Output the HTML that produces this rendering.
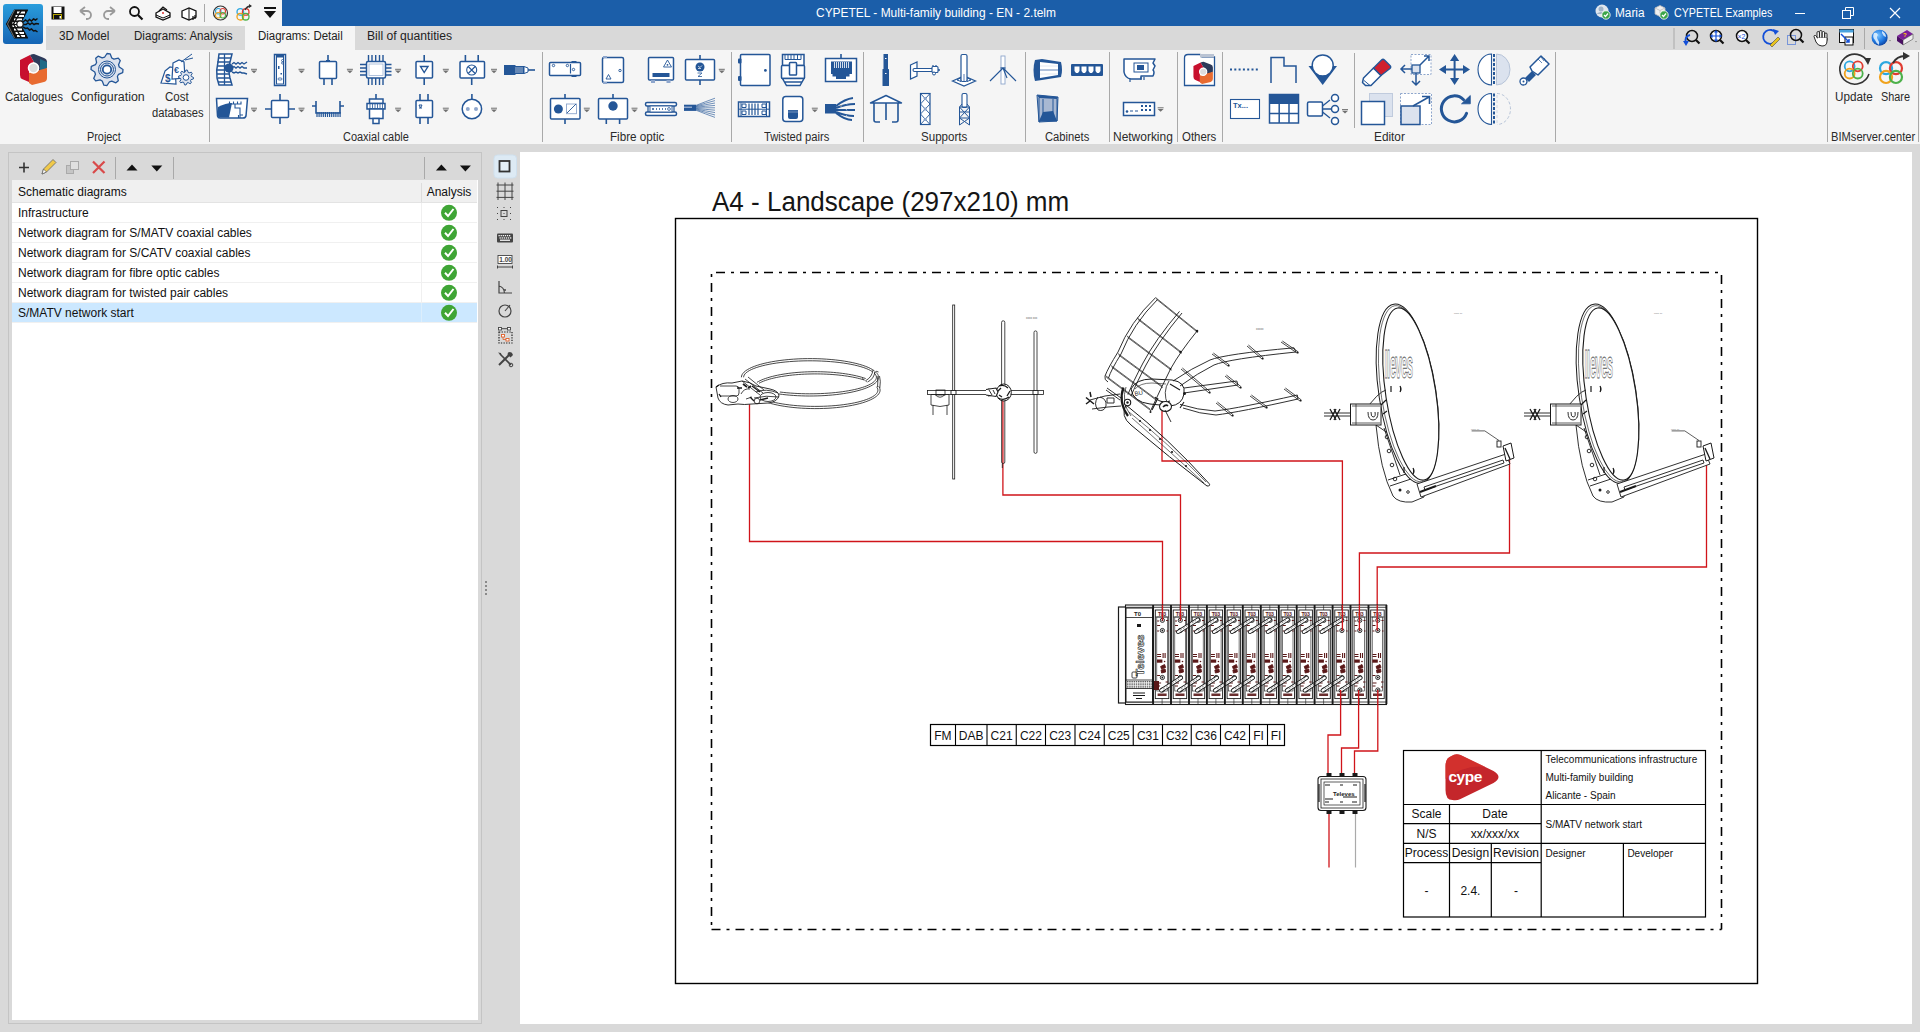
<!DOCTYPE html><html><head><meta charset="utf-8"><style>
*{margin:0;padding:0;box-sizing:border-box}
html,body{width:1920px;height:1032px;overflow:hidden;background:#d9d9d9;font-family:"Liberation Sans",sans-serif;color:#222}
.a{position:absolute;display:block}
.t{position:absolute;white-space:nowrap;font-size:12px;line-height:1}
</style></head><body><div class="a" style="left:0px;top:0px;width:1920px;height:1032px;background:#d9d9d9"></div>
<div class="a" style="left:0px;top:0px;width:282px;height:26px;background:#f5f5f5"></div>
<div class="a" style="left:0px;top:26px;width:46px;height:24px;background:#f5f5f5"></div>
<div class="a" style="left:282px;top:0px;width:1638px;height:26px;background:#1b5ea9"></div>
<div class="a" style="left:0px;top:50px;width:1920px;height:94px;background:#f5f5f5"></div>
<div class="a" style="left:245px;top:26px;width:110px;height:24px;background:#f5f5f5"></div>
<svg class="a" style="left:3px;top:4px;" width="40" height="40" viewBox="0 0 40 40"><defs><linearGradient id="lg" x1="0" y1="0" x2="0" y2="1"><stop offset="0" stop-color="#2a9ddc"/><stop offset="1" stop-color="#1565b5"/></linearGradient></defs>
<rect x="0" y="0" width="40" height="40" rx="3" fill="url(#lg)"/>
<path d="M24.5 6 L11.5 6 L3.5 20 L11.5 34 L24.5 34 L17 20 Z" fill="#111" stroke="#111" stroke-width="1.2" stroke-linejoin="round"/>
<path d="M14 8.5h8M12.5 12h8.5M11 15.5h8M9.5 19h7.5M9.5 22h7.5M11 25.5h8M12.5 29h8.5M14 32h8" stroke="#fff" stroke-width="2"/>
<path d="M11.5 6 L4.5 20 L11.5 34" stroke="#888" stroke-width="0.8" fill="none"/>
<path d="M13.5 7 L7 20 L13.5 33" stroke="#111" stroke-width="1.4" fill="none"/>
<path d="M18.5 6 L10.5 20 L18.5 34" stroke="#111" stroke-width="1.5" fill="none"/><circle cx="17" cy="20" r="3.2" fill="#fff" stroke="#111" stroke-width="1.2"/>
<g stroke="#111" stroke-width="1.5" fill="none"><path d="M20 18 l2.5-2 l2 1.5 l2-2 l2 1.5 l2-2 l2 1 l2-1.5"/><path d="M20.5 20.5 l2.5 0 l2-1.5 l2 1.5 l2-1.5 l2 1.5 l2-1 l3 0.5"/><path d="M20 23 l2.5 1.5 l2-0.5 l2 2 l2-1 l2 2 l2-0.5 l2 1.5"/></g>
</svg>
<svg class="a" style="left:51px;top:6px;" width="14" height="14" viewBox="0 0 14 14"><rect x="0.5" y="0.5" width="13" height="13" fill="#111"/><rect x="2.5" y="1" width="8" height="6" fill="#fff"/><rect x="2" y="8" width="9" height="5" fill="#b5a400"/><rect x="3" y="9" width="7" height="4" fill="#111"/><rect x="8.5" y="10" width="1.5" height="2.5" fill="#fff"/></svg>
<svg class="a" style="left:77px;top:5px;" width="16" height="16" viewBox="0 0 16 16"><path d="M3 6 L8 2 M3 6 L8 10 M3 6 H10 a4 4 0 0 1 0 8 H9" stroke="#9a9a9a" stroke-width="1.8" fill="none"/></svg>
<svg class="a" style="left:102px;top:5px;" width="16" height="16" viewBox="0 0 16 16"><path d="M13 6 L8 2 M13 6 L8 10 M13 6 H6 a4 4 0 0 0 0 8 H7" stroke="#9a9a9a" stroke-width="1.8" fill="none"/></svg>
<svg class="a" style="left:128px;top:5px;" width="16" height="16" viewBox="0 0 16 16"><circle cx="6.5" cy="6.5" r="4.5" stroke="#111" stroke-width="1.8" fill="none"/><path d="M10 10 L14.5 14.5" stroke="#111" stroke-width="2.2"/></svg>
<svg class="a" style="left:154px;top:5px;" width="18" height="16" viewBox="0 0 18 16"><path d="M2 8 L9 4 L16 8 L16 12 L9 15 L2 12 Z" fill="#fff" stroke="#111" stroke-width="1.3"/><path d="M5 6 L9 2 L13 5" stroke="#111" fill="none" stroke-width="1.2"/><circle cx="9" cy="8" r="1" fill="#d33"/><path d="M2 10 L9 13 L16 10" stroke="#111" fill="none" stroke-width="1"/></svg>
<svg class="a" style="left:180px;top:5px;" width="18" height="16" viewBox="0 0 18 16"><path d="M2 6 L9 3 L16 6 L16 12 L9 15 L2 12 Z" fill="#fff" stroke="#111" stroke-width="1.3"/><path d="M9 3 L9 15" stroke="#111" stroke-width="1"/><path d="M13 11 v4 M15 10 v4" stroke="#111" stroke-width="1.2"/></svg>
<div class="a" style="left:204px;top:4px;width:1px;height:18px;background:#a8a8a8"></div>
<svg class="a" style="left:212px;top:5px;" width="18" height="16" viewBox="0 0 18 16"><circle cx="8.5" cy="8" r="7" stroke="#333" stroke-width="1.2" fill="none"/><circle cx="6.25" cy="6.25" r="2.75" stroke="#2aa7e0" stroke-width="1.1" fill="none"/><circle cx="10.75" cy="6.25" r="2.75" stroke="#e03c31" stroke-width="1.1" fill="none"/><circle cx="6.25" cy="10.25" r="2.75" stroke="#f0a21b" stroke-width="1.1" fill="none"/><circle cx="10.75" cy="10.25" r="2.75" stroke="#4cb14a" stroke-width="1.1" fill="none"/></svg>
<svg class="a" style="left:235px;top:4px;" width="18" height="18" viewBox="0 0 18 18"><circle cx="5.3" cy="7.9" r="3.3000000000000003" stroke="#2aa7e0" stroke-width="1.3" fill="none"/><circle cx="10.7" cy="7.9" r="3.3000000000000003" stroke="#e03c31" stroke-width="1.3" fill="none"/><circle cx="5.3" cy="12.7" r="3.3000000000000003" stroke="#f0a21b" stroke-width="1.3" fill="none"/><circle cx="10.7" cy="12.7" r="3.3000000000000003" stroke="#4cb14a" stroke-width="1.3" fill="none"/><path d="M10 6 Q12 2 16 2" stroke="#333" stroke-width="1.5" fill="none"/><path d="M14 0 L17 2 L14 4" fill="#333"/></svg>
<svg class="a" style="left:263px;top:6px;" width="14" height="14" viewBox="0 0 14 14"><rect x="1" y="1" width="12" height="2" fill="#111"/><path d="M1 5 H13 L7 12 Z" fill="#111"/></svg>
<div class="t" style="left:816.00px;top:7.3px;font-size:12px;color:#fff;transform:scaleX(0.9959);transform-origin:0 0;">CYPETEL - Multi-family building - EN - 2.telm</div>
<svg class="a" style="left:1595px;top:4px;" width="16" height="16" viewBox="0 0 16 16"><circle cx="7" cy="7" r="6.5" fill="#dfe6ee"/><circle cx="6" cy="5" r="2.5" fill="#9fb3c8"/><path d="M1.5 10 Q6 6 10 10" fill="#9fb3c8"/><circle cx="11" cy="11" r="4.2" fill="#3aa54a" stroke="#fff" stroke-width="0.8"/><path d="M9 11 L10.5 12.5 L13 9.5" stroke="#fff" stroke-width="1.2" fill="none"/></svg>
<div class="t" style="left:1615.00px;top:7.3px;font-size:12px;color:#fff;transform:scaleX(0.9833);transform-origin:0 0;">Maria</div>
<svg class="a" style="left:1653px;top:4px;" width="16" height="16" viewBox="0 0 16 16"><path d="M2 4 L7 1.5 L12 4 L12 10 L7 12.5 L2 10 Z" fill="#f0f0f0" stroke="#bbb" stroke-width="0.8"/><path d="M2 4 L7 6.5 L12 4 M7 6.5 V12.5" stroke="#bbb" stroke-width="0.8" fill="none"/><circle cx="11" cy="11" r="4.2" fill="#3aa54a" stroke="#fff" stroke-width="0.8"/><path d="M9 11 L10.5 12.5 L13 9.5" stroke="#fff" stroke-width="1.2" fill="none"/></svg>
<div class="t" style="left:1674.00px;top:7.3px;font-size:12px;color:#fff;transform:scaleX(0.8909);transform-origin:0 0;">CYPETEL Examples</div>
<div class="a" style="left:1795px;top:13px;width:10px;height:1px;background:#fff"></div>
<svg class="a" style="left:1842px;top:7px;" width="12" height="12" viewBox="0 0 12 12"><rect x="0.5" y="3.5" width="8" height="8" stroke="#fff" fill="none"/><path d="M3.5 3.5 V0.5 H11.5 V8.5 H8.5" stroke="#fff" fill="none"/></svg>
<svg class="a" style="left:1889px;top:7px;" width="12" height="12" viewBox="0 0 12 12"><path d="M1 1 L11 11 M11 1 L1 11" stroke="#fff" stroke-width="1.2"/></svg>
<div class="t" style="left:59.00px;top:29.8px;font-size:12px;color:#222;transform:scaleX(0.9804);transform-origin:0 0;">3D Model</div>
<div class="t" style="left:134.00px;top:29.8px;font-size:12px;color:#222;transform:scaleX(0.9657);transform-origin:0 0;">Diagrams: Analysis</div>
<div class="t" style="left:257.50px;top:29.8px;font-size:12px;color:#222;transform:scaleX(0.9551);transform-origin:0 0;">Diagrams: Detail</div>
<div class="t" style="left:367.00px;top:29.8px;font-size:12px;color:#222;transform:scaleX(1.0119);transform-origin:0 0;">Bill of quantities</div>
<svg class="a" style="left:0;top:0" width="1920" height="200" viewBox="0 0 1920 200"><rect x="209.0" y="52" width="1" height="90" fill="#a9a9a9"/><rect x="542.0" y="52" width="1" height="90" fill="#a9a9a9"/><rect x="731.0" y="52" width="1" height="90" fill="#a9a9a9"/><rect x="863.0" y="52" width="1" height="90" fill="#a9a9a9"/><rect x="1025.0" y="52" width="1" height="90" fill="#a9a9a9"/><rect x="1109.0" y="52" width="1" height="90" fill="#a9a9a9"/><rect x="1177.0" y="52" width="1" height="90" fill="#a9a9a9"/><rect x="1222.0" y="52" width="1" height="90" fill="#a9a9a9"/><rect x="1555.0" y="52" width="1" height="90" fill="#a9a9a9"/><rect x="1827.0" y="52" width="1" height="90" fill="#a9a9a9"/><rect x="1918.0" y="52" width="1" height="90" fill="#a9a9a9"/><rect x="1354" y="53" width="1" height="75" fill="#a9a9a9"/><g transform="translate(18,53)">
<path d="M2 7 L12 2 L16 9 L11 12 L11 29 L4 26 Q2 25 2 22 Z" fill="#c8102e"/>
<path d="M12 2 Q14 1 16 1 L26 5 Q29 6 29 9 L29 15 L22 19 L16 9 Z" fill="#2d3a5a"/>
<path d="M22 6 L29 9 L29 15 L22 19 Z" fill="#1f6a86"/>
<path d="M11 20 L29 15 L29 25 Q29 28 26 29 L14 32 L11 30 Z" fill="#e86b30"/>
<circle cx="15.5" cy="15" r="5" fill="#ddd" stroke="#fff" stroke-width="1.6"/>
</g><polygon points="107.00,53.50 110.12,53.81 111.78,57.95 113.94,59.11 118.31,58.19 120.30,60.61 118.55,64.72 119.26,67.06 123.00,69.50 122.69,72.62 118.55,74.28 117.39,76.44 118.31,80.81 115.89,82.80 111.78,81.05 109.44,81.76 107.00,85.50 103.88,85.19 102.22,81.05 100.06,79.89 95.69,80.81 93.70,78.39 95.45,74.28 94.74,71.94 91.00,69.50 91.31,66.38 95.45,64.72 96.61,62.56 95.69,58.19 98.11,56.20 102.22,57.95 104.56,57.24" fill="#dde3ee" stroke="#245697" stroke-width="1.3" stroke-linejoin="round"/><circle cx="107" cy="69.5" r="8.5" stroke="#245697" stroke-width="1" fill="none"/><circle cx="107" cy="69.5" r="6.5" stroke="#245697" stroke-width="1" fill="none"/><circle cx="107" cy="69.5" r="4.2" stroke="#245697" stroke-width="1.8" fill="#fff"/><g stroke="#245697" stroke-width="1.2" fill="#fff">
<path d="M165 71 L170 67 L175 68 L176 84 L161 83 Z"/>
<path d="M173 63 L179 60 L184 62 L185 78 L172 79 Z"/>
</g>
<text x="165" y="82" font-size="10" font-weight="bold" fill="#245697" font-family="Liberation Sans">$</text>
<text x="174" y="73" font-size="9" font-weight="bold" fill="#245697" font-family="Liberation Sans">€</text>
<path d="M181 62 L192 54 M185 60 L193 58" stroke="#245697" stroke-width="1"/><polygon points="186.00,70.00 187.46,70.14 188.10,72.42 189.06,72.93 191.30,72.20 192.24,73.33 191.08,75.40 191.39,76.43 193.50,77.50 193.36,78.96 191.08,79.60 190.57,80.56 191.30,82.80 190.17,83.74 188.10,82.58 187.07,82.89 186.00,85.00 184.54,84.86 183.90,82.58 182.94,82.07 180.70,82.80 179.76,81.67 180.92,79.60 180.61,78.57 178.50,77.50 178.64,76.04 180.92,75.40 181.43,74.44 180.70,72.20 181.83,71.26 183.90,72.42 184.93,72.11" fill="#dde3ee" stroke="#245697" stroke-width="1" stroke-linejoin="round"/><circle cx="186" cy="77.5" r="2.8" stroke="#245697" stroke-width="1" fill="#fff"/><path d="M219 54 H232 L230 62 Q228 70 230 78 L232 85 H219 L217 78 Q216 70 218 62 Z" fill="#fff" stroke="#245697" stroke-width="1.5"/>
<g stroke="#245697" stroke-width="1.3"><path d="M218 58H231M217.5 62H230M217 66H229M217 70H229M217 74H229M217.5 78H230M218 82H231M224.5 54V85"/></g>
<circle cx="229" cy="68" r="4.5" fill="#245697"/>
<path d="M232 64 l2 -1.5 l2 1.5 l2 -1.5 l2 1.5 l2 -1.5 l2 1.5 l3 -2 M232 68 l2 -1.5 l2 1.5 l2 -1.5 l2 1.5 l2 -1.5 l2 1.5 l3 0 M232 72 l2 1 l2 -1 l2 1 l2 -1 l2 1 l2 0 l3 1" stroke="#245697" stroke-width="1.4" fill="none"/><rect x="251" y="68.8" width="6" height="1" fill="#707070"/><path d="M251 70.5 H257 L254 73.3 Z" fill="#707070"/><rect x="274.5" y="54.5" width="11" height="31" stroke="#245697" fill="#fff" stroke-width="1.5"/><rect x="276.5" y="56" width="7" height="28" stroke="#245697" stroke-width="1" fill="#fff"/><rect x="276" y="55" width="8" height="2.5" fill="#245697"/><rect x="278" y="66" width="1.5" height="3" fill="#245697"/><rect x="280.5" y="73" width="1.5" height="1.5" fill="#245697"/><rect x="278" y="78" width="4" height="2" rx="1" stroke="#245697" stroke-width="0.8" fill="none"/><circle cx="282.5" cy="60.5" r="1" stroke="#245697" stroke-width="0.8" fill="none"/><circle cx="282.5" cy="63" r="1" stroke="#245697" stroke-width="0.8" fill="none"/><rect x="298.5" y="68.8" width="6" height="1" fill="#707070"/><path d="M298.5 70.5 H304.5 L301.5 73.3 Z" fill="#707070"/><rect x="319.5" y="61.5" width="17" height="17" rx="1" stroke="#245697" fill="#fff" stroke-width="1.5"/><path d="M328 55V61M324 79V85M332 79V85" stroke="#245697" stroke-width="1.6"/><rect x="326" y="60" width="4" height="2" fill="#245697"/><rect x="346.9" y="68.8" width="6" height="1" fill="#707070"/><path d="M346.9 70.5 H352.9 L349.9 73.3 Z" fill="#707070"/><path d="M368.5 55V61M368.5 78V85M372 55V61M372 78V85M375.7 55V61M375.7 78V85M379.5 55V61M379.5 78V85M383 55V61M383 78V85M360 64.5H366.5M385.5 64.5H391.5M360 68H366.5M385.5 68H391.5M360 71.5H366.5M385.5 71.5H391.5M360 75H366.5M385.5 75H391.5" stroke="#245697" stroke-width="1.4"/><rect x="366.5" y="61.5" width="19" height="16.5" rx="1.5" stroke="#245697" fill="#fff" stroke-width="1.5"/><rect x="369" y="64" width="14" height="11.5" stroke="#9fb4d4" stroke-width="0.8" fill="none"/><rect x="395.1" y="68.8" width="6" height="1" fill="#707070"/><path d="M395.1 70.5 H401.1 L398.1 73.3 Z" fill="#707070"/><rect x="416" y="61.5" width="16.5" height="16.5" rx="1" stroke="#245697" fill="#fff" stroke-width="1.5"/><path d="M424.2 55V61.5M424.2 78V85" stroke="#245697" stroke-width="1.6"/><path d="M420.5 66.5H428L424.2 72.5Z" stroke="#245697" stroke-width="1.4" fill="none"/><rect x="442.8" y="68.8" width="6" height="1" fill="#707070"/><path d="M442.8 70.5 H448.8 L445.8 73.3 Z" fill="#707070"/><rect x="460" y="61.5" width="24.5" height="16.5" rx="1" stroke="#245697" fill="#fff" stroke-width="1.5"/><path d="M465.4 55V61.5M478.2 55V61.5M471.7 78V85" stroke="#245697" stroke-width="1.6"/><circle cx="471.7" cy="70" r="5" stroke="#245697" stroke-width="1.1" fill="none"/><path d="M468.2 66.5L475.2 73.5M475.2 66.5L468.2 73.5" stroke="#245697" stroke-width="1.1"/><rect x="491" y="68.8" width="6" height="1" fill="#707070"/><path d="M491 70.5 H497 L494 73.3 Z" fill="#707070"/><rect x="504" y="65" width="11.5" height="10" fill="#245697"/><path d="M515 66H524V74H515Z" fill="#245697"/><path d="M516 67v6M518 67v6M520 67v6M522 67v6" stroke="#fff" stroke-width="0.6"/><path d="M524 66.5L528 68V72L524 73.5Z" fill="#fff" stroke="#245697" stroke-width="1"/><path d="M528 70H535" stroke="#245697" stroke-width="1.6"/><path d="M216.5 98.5H247.5L246 116Q245.5 118 243 118H220Q218 118 217.5 116Z" stroke="#245697" fill="#fff" stroke-width="1.5"/><path d="M218 107 Q226 103 232 103 L229 117.5 H220 Q218 117.5 218 116Z" fill="#245697"/><path d="M229.5 101.5V104H241V101.5M233.5 101.5V104M237.5 101.5V104M235 104V108H240V115H243M240 115V118M238.5 115V118" stroke="#245697" stroke-width="1.1" fill="none"/><rect x="251" y="107.7" width="6" height="1" fill="#707070"/><path d="M251 109.4 H257 L254 112.2 Z" fill="#707070"/><rect x="271.5" y="100.5" width="17" height="17" rx="1" stroke="#245697" fill="#fff" stroke-width="1.5"/><path d="M280 94V100.5M280 117.5V124M265 109H271.5M288.5 109H295" stroke="#245697" stroke-width="1.6"/><rect x="298.5" y="107.7" width="6" height="1" fill="#707070"/><path d="M298.5 109.4 H304.5 L301.5 112.2 Z" fill="#707070"/><path d="M316 101V113H340V101M312 106H316M340 106H344" stroke="#245697" stroke-width="1.6" fill="none"/><path d="M317.0 112V117M319.1 112V117M321.2 112V117M323.3 112V117M325.4 112V117M327.5 112V117M329.6 112V117M331.7 112V117M333.8 112V117M335.9 112V117M338.0 112V117M340.1 112V117" stroke="#245697" stroke-width="1.2"/><path d="M376 94V99" stroke="#245697" stroke-width="1.6"/><rect x="369.5" y="99" width="13.5" height="4.5" stroke="#245697" fill="#fff" stroke-width="1.5"/><rect x="367" y="103.5" width="18" height="5.5" stroke="#245697" fill="#fff" stroke-width="1.5"/><path d="M370 104v4M372.5 104v4M375 104v4M377.5 104v4M380 104v4M382.5 104v4" stroke="#245697" stroke-width="0.8"/><rect x="369.5" y="109" width="13.5" height="9.5" stroke="#245697" fill="#fff" stroke-width="1.5"/><rect x="373" y="118.5" width="6" height="5" stroke="#245697" fill="#fff" stroke-width="1.5"/><rect x="395.1" y="107.7" width="6" height="1" fill="#707070"/><path d="M395.1 109.4 H401.1 L398.1 112.2 Z" fill="#707070"/><rect x="416" y="100.5" width="16.5" height="17" rx="1" stroke="#245697" fill="#fff" stroke-width="1.5"/><path d="M420 94V100.5M428 94V100.5M420 117.5V124M428 117.5V124" stroke="#245697" stroke-width="1.6"/><path d="M419 105H422L420.5 108ZM419 108H422" stroke="#245697" stroke-width="1" fill="none"/><rect x="442.8" y="107.7" width="6" height="1" fill="#707070"/><path d="M442.8 109.4 H448.8 L445.8 112.2 Z" fill="#707070"/><circle cx="471.9" cy="109" r="9.7" stroke="#245697" fill="#fff" stroke-width="1.5"/><path d="M471.9 94V99.3" stroke="#245697" stroke-width="1.6"/><circle cx="467.8" cy="109" r="2" fill="#8ea6cc"/><circle cx="476" cy="109" r="2" fill="#8ea6cc"/><rect x="491" y="107.7" width="6" height="1" fill="#707070"/><path d="M491 109.4 H497 L494 112.2 Z" fill="#707070"/><rect x="549.5" y="62.5" width="31" height="13" rx="1" stroke="#245697" fill="#fff" stroke-width="1.5"/><rect x="571.5" y="61" width="5" height="2" fill="#245697"/><rect x="571.5" y="75" width="5" height="2" fill="#245697"/><circle cx="553.5" cy="65.5" r="1.2" stroke="#245697" stroke-width="0.9" fill="none"/><circle cx="567.4" cy="65.5" r="1.2" stroke="#245697" stroke-width="0.9" fill="none"/><circle cx="573.5" cy="69.5" r="1.2" stroke="#245697" stroke-width="0.9" fill="none"/><path d="M570.5 64V73.5" stroke="#245697" stroke-width="1.2"/><rect x="602.5" y="57.5" width="21" height="25" rx="1.5" stroke="#245697" fill="#fff" stroke-width="1.5"/><rect x="603" y="56" width="4" height="2" fill="#8ea6cc"/><rect x="603" y="82" width="4" height="2" fill="#8ea6cc"/><path d="M608.5 74.5L611 79H606Z" stroke="#245697" stroke-width="0.9" fill="none"/><circle cx="620" cy="70.5" r="1.2" stroke="#245697" stroke-width="0.9" fill="none"/><rect x="648.5" y="57.5" width="25" height="22.5" rx="1" stroke="#245697" fill="#fff" stroke-width="1.5"/><rect x="652.5" y="73" width="17" height="4" fill="#245697"/><path d="M667.5 60L671.5 67H663.5Z" stroke="#245697" stroke-width="0.9" fill="none"/><circle cx="667.5" cy="64.8" r="0.9" fill="#245697"/><rect x="651" y="80" width="4" height="3" fill="#8ea6cc"/><rect x="666.5" y="80" width="4" height="3" fill="#8ea6cc"/><rect x="685.5" y="59.5" width="29" height="20.5" rx="1" stroke="#245697" fill="#fff" stroke-width="1.5"/><path d="M700 55V59.5M700 80V85" stroke="#245697" stroke-width="1.6"/><circle cx="700" cy="67" r="4.5" fill="#245697"/><path d="M698 66l2 1.5l2 -2M698 68.5l3 0" stroke="#fff" stroke-width="0.7" fill="none"/><path d="M697.5 73H702L698 76.5H702" stroke="#245697" stroke-width="0.8" fill="none"/><rect x="718.8" y="68.8" width="6" height="1" fill="#707070"/><path d="M718.8 70.5 H724.8 L721.8 73.3 Z" fill="#707070"/><rect x="550.5" y="98.5" width="29.5" height="20.5" rx="1" stroke="#245697" fill="#fff" stroke-width="1.5"/><path d="M565 94V98.5M565 119V124" stroke="#245697" stroke-width="1.6"/><circle cx="558.4" cy="109" r="4.5" fill="#245697"/><rect x="566.5" y="104" width="10" height="9.7" stroke="#8ea6cc" stroke-width="0.9" fill="none"/><path d="M567 113L576 104" stroke="#245697" stroke-width="0.9"/><rect x="583.8" y="107.7" width="6" height="1" fill="#707070"/><path d="M583.8 109.4 H589.8 L586.8 112.2 Z" fill="#707070"/><rect x="598.5" y="98.5" width="29" height="20.5" rx="1" stroke="#245697" fill="#fff" stroke-width="1.5"/><path d="M613 94V98.5M606.3 119V124M619.6 119V124" stroke="#245697" stroke-width="1.6"/><circle cx="613" cy="106" r="4.7" fill="#245697"/><rect x="631.5" y="107.7" width="6" height="1" fill="#707070"/><path d="M631.5 109.4 H637.5 L634.5 112.2 Z" fill="#707070"/><rect x="645.5" y="102.5" width="31" height="3.5" rx="1.5" stroke="#245697" fill="#fff" stroke-width="1.5"/><rect x="645.5" y="112" width="31" height="3.5" rx="1.5" stroke="#245697" fill="#fff" stroke-width="1.5"/><path d="M648 106V112M674 106V112" stroke="#245697" stroke-width="1.2"/><rect x="650" y="106" width="22" height="6" stroke="#245697" stroke-width="0.9" fill="#fff"/><path d="M652 109h2M656 109h1M659 109h1M662 109h1M665 109h1" stroke="#245697" stroke-width="1.4"/><circle cx="669" cy="109" r="1.4" stroke="#245697" stroke-width="0.8" fill="none"/><rect x="684" y="104.7" width="12" height="6.2" fill="#245697"/><rect x="684" y="106.5" width="8" height="1.5" fill="#8ea6cc"/><path d="M696 105.4 Q705 101.8 715 98.2M696 106.0 Q705 103.3 715 100.6M696 106.6 Q705 104.8 715 103.0M696 107.2 Q705 106.3 715 105.4M696 107.8 Q705 107.8 715 107.8M696 108.4 Q705 109.3 715 110.2M696 109.0 Q705 110.8 715 112.6M696 109.6 Q705 112.3 715 115.0M696 110.2 Q705 113.8 715 117.4" stroke="#245697" stroke-width="0.8" fill="none" opacity="0.8"/><rect x="740.5" y="54.5" width="29.5" height="31" rx="1" stroke="#245697" fill="#fff" stroke-width="1.5"/><rect x="738" y="58.5" width="3.5" height="5" rx="1" fill="#245697"/><rect x="738" y="76" width="3.5" height="5" rx="1" fill="#245697"/><circle cx="765.4" cy="70.4" r="1.4" fill="#245697"/><path d="M782.5 54.5H804V65.5H782.5Z" stroke="#245697" fill="#fff" stroke-width="1.5"/><path d="M785 55V59.5H801V55M788 55V59M791 55V59M794 55V59M797.5 55V59" stroke="#245697" stroke-width="1" fill="none"/><rect x="781.5" y="65.5" width="23" height="13" rx="1" stroke="#245697" fill="#fff" stroke-width="1.5"/><rect x="789.5" y="62.5" width="7" height="12.5" rx="0.8" stroke="#245697" fill="#fff" stroke-width="1.5"/><path d="M782.5 78.5H804L802 82H784.5ZM784.5 82H802L800 85.5H786.5Z" stroke="#245697" fill="#fff" stroke-width="1.5"/><rect x="825.5" y="58.5" width="31" height="23" stroke="#245697" fill="#fff" stroke-width="1.5"/><path d="M841 54V58.5" stroke="#245697" stroke-width="1.6"/><path d="M831 61.5H852V74H849.5V76.5H846V79H836V76.5H832.5V74H831Z" fill="#245697"/><path d="M834.5 62V68M836.5 62V68M838.5 62V68M840.5 62V68M842.5 62V68M844.5 62V68M846.5 62V68M848.5 62V68" stroke="#fff" stroke-width="0.8"/><rect x="738.5" y="102" width="31" height="14.5" stroke="#245697" fill="#fff" stroke-width="1.5"/><path d="M738.5 109.2H769.5" stroke="#245697" stroke-width="1"/><path d="M742 104V107.5H746V104ZM742 111V114.5H746V111ZM762 104V107.5H766V104ZM762 111V114.5H766V111Z" stroke="#245697" stroke-width="1" fill="none"/><path d="M749 103.5V115M752 103.5V115M755 103.5V115M758 103.5V115" stroke="#245697" stroke-width="1.2"/><path d="M741 102.5V116M766.5 102.5V116" stroke="#245697" stroke-width="1"/><rect x="782.8" y="96.5" width="20" height="25" rx="3" stroke="#245697" fill="#fff" stroke-width="1.5"/><path d="M788 110H798V117Q798 119 796 119H790Q788 119 788 117Z" fill="#245697"/><path d="M789 110.5v2.5M791 110.5v2.5M793 110.5v2.5M795 110.5v2.5M797 110.5v2.5" stroke="#8ea6cc" stroke-width="0.8"/><rect x="811.8" y="107.7" width="6" height="1" fill="#707070"/><path d="M811.8 109.4 H817.8 L814.8 112.2 Z" fill="#707070"/><rect x="825" y="104" width="11" height="9.5" fill="#245697"/><path d="M836 106 Q845 99 853 98M836 108 Q846 104 855 104M836 110 Q846 110 855 110M836 112 Q846 116 854 116M836 113 Q845 120 852 120" stroke="#245697" stroke-width="2" fill="none"/><path d="M840 105 l1 1.5 l1 -1.5 M846 103 l1 1.5 M846 109 l1 1.5 M846 115 l1 1.5" stroke="#fff" stroke-width="0.6"/><rect x="883.5" y="54" width="4.5" height="15" fill="#245697"/><rect x="882.5" y="69" width="6.5" height="17" rx="0.5" fill="#245697"/><rect x="885" y="58" width="1.5" height="1" fill="#fff"/><rect x="885" y="73" width="1.5" height="1" fill="#fff"/><path d="M910.5 65 L917 62 V76 L910.5 79 Z" stroke="#245697" stroke-width="1.2" fill="#fff"/><rect x="913" y="68.5" width="25" height="3" rx="1.5" stroke="#245697" stroke-width="1.1" fill="#fff"/><path d="M933 67V65M936 67V65" stroke="#245697" stroke-width="1.2"/><rect x="932" y="66.5" width="6" height="6" rx="1" stroke="#245697" stroke-width="1.1" fill="#fff"/><circle cx="934" cy="73.5" r="1.5" stroke="#245697" stroke-width="1" fill="#fff"/><path d="M938 70H940" stroke="#245697" stroke-width="1.3"/><path d="M952.5 81L964 76L975.5 81L964 86Z" stroke="#245697" stroke-width="1.2" fill="#fff"/><path d="M957 80L961 77.5V81.5ZM971 80L967 77.5V81.5Z" stroke="#245697" stroke-width="1" fill="none"/><rect x="961" y="54.5" width="6" height="27" rx="1.5" stroke="#245697" stroke-width="1.2" fill="#fff"/><path d="M964 74V81" stroke="#8ea6cc" stroke-width="1.5"/><rect x="1001" y="56" width="4" height="28" stroke="#8ea6cc" stroke-width="0.9" fill="#fff"/><path d="M1003 68L990 81M1003 68L1016 81M1003 68L1007 78" stroke="#245697" stroke-width="1.1" fill="none"/><path d="M1000.5 68H1005.5" stroke="#245697" stroke-width="1.3"/><path d="M870.5 103L886 95.5L901.5 103Z" stroke="#245697" stroke-width="1.4" fill="#fff" stroke-linejoin="round"/><path d="M874 103V120Q874 122 876 122H880M898 103V120Q898 122 896 122H892M886 103V120" stroke="#245697" stroke-width="1.6" fill="none"/><rect x="920.5" y="93.5" width="9.5" height="31" stroke="#245697" stroke-width="1.2" fill="#fff"/><path d="M920.5 93.5L930 104L920.5 114L930 124.5M930 93.5L920.5 104L930 114L920.5 124.5" stroke="#245697" stroke-width="0.9" fill="none"/><circle cx="925.2" cy="98.5" r="1.6" fill="#8ea6cc"/><circle cx="925.2" cy="109" r="1.6" fill="#8ea6cc"/><circle cx="925.2" cy="119.5" r="1.6" fill="#8ea6cc"/><rect x="962" y="93.5" width="5" height="14" rx="1.5" stroke="#245697" stroke-width="1.1" fill="#fff"/><path d="M962 104L959.5 107V125M967 104L969.5 107V125M959.5 107H969.5M959.5 112H969.5M959.5 118H969.5M959.5 107L969.5 118M969.5 107L959.5 118M959.5 118L969.5 125M969.5 118L959.5 125" stroke="#245697" stroke-width="1" fill="none"/><path d="M1035 60 Q1032 70 1035 81 L1042 80 L1061 77 Q1063 70 1061 62 L1042 59 Z" fill="#245697"/><path d="M1040 62 L1058 64 V75 L1040 78 Z" fill="#fff"/><path d="M1040 70H1058" stroke="#8ea6cc" stroke-width="1.4"/><path d="M1040 66H1058M1040 74H1058" stroke="#dbe2ee" stroke-width="0.8"/><rect x="1071" y="64" width="32" height="12" rx="1" fill="#245697"/><path d="M1074.5 66.5H1079.5V71L1078.0 73H1076.0L1074.5 71Z" fill="#fff"/><path d="M1081.5 66.5H1086.5V71L1085.0 73H1083.0L1081.5 71Z" fill="#fff"/><path d="M1088.5 66.5H1093.5V71L1092.0 73H1090.0L1088.5 71Z" fill="#fff"/><path d="M1095.5 66.5H1100.5V71L1099.0 73H1097.0L1095.5 71Z" fill="#fff"/><path d="M1037 95 L1058 97 L1057 121 L1039 122 Z" fill="#a8b8d2" stroke="#245697" stroke-width="1"/><path d="M1037 95L1058 97L1057 99L1039 98Z" fill="#245697"/><path d="M1039 98V122M1043 99V119M1053 99V117M1057 99V121M1043 119L1039 122M1043 117H1053L1057 121H1039Z" stroke="#245697" stroke-width="1" fill="none"/><path d="M1043 112L1053 111L1057 121H1039Z" fill="#245697"/><path d="M1124 59 H1155 L1153 63 L1155 66 L1153 70 Q1155 72 1153 76 H1141 V79 H1131 Q1125 78 1124 72 Z" stroke="#245697" fill="#fff" stroke-width="1.5" stroke-linejoin="round"/><rect x="1134" y="63" width="14" height="9" stroke="#245697" stroke-width="1" fill="#fff"/><rect x="1137" y="65" width="7" height="5" fill="#245697"/><path d="M1130 79V82M1141 77V80M1144 77V80" stroke="#245697" stroke-width="1.2"/><rect x="1123.5" y="102.5" width="31" height="13" stroke="#245697" fill="#fff" stroke-width="1.5"/><circle cx="1127" cy="111.5" r="1.3" fill="#245697"/><path d="M1130 111H1133M1135 111H1138" stroke="#245697" stroke-width="1.1"/><path d="M1141 105h2v2h-2zM1145 105h2v2h-2zM1149 105h2v2h-2zM1141 109h2v2h-2zM1145 109h2v2h-2zM1149 109h2v2h-2z" fill="#245697"/><rect x="1157.6" y="107.3" width="6" height="1" fill="#707070"/><path d="M1157.6 109.0 H1163.6 L1160.6 111.8 Z" fill="#707070"/><path d="M1184.5 58 Q1184.5 54.5 1188 54.5 H1200 L1202 57 H1214.5 V85.5 H1184.5 Z" fill="#fff" stroke="#245697" stroke-width="1.3"/><rect x="1200" y="54" width="14" height="3.5" fill="#b9c3d3"/><g transform="translate(1192,61) scale(0.72)">
<path d="M2 7 L12 2 L16 9 L11 12 L11 29 L4 26 Q2 25 2 22 Z" fill="#c8102e"/>
<path d="M12 2 Q14 1 16 1 L26 5 Q29 6 29 9 L29 15 L22 19 L16 9 Z" fill="#2d3a5a"/>
<path d="M11 20 L29 15 L29 25 Q29 28 26 29 L14 32 L11 30 Z" fill="#e86b30"/>
<circle cx="15.5" cy="15" r="5" fill="#ddd" stroke="#fff" stroke-width="1.6"/></g><path d="M1230 69.5H1260" stroke="#245697" stroke-width="2" stroke-dasharray="2 2.3"/><path d="M1271 83V57.5H1284V66H1296V83" stroke="#245697" stroke-width="1.5" fill="none"/><path d="M1308.5 66 L1322.7 85 L1337 66 Z" fill="#245697"/><circle cx="1322.7" cy="65.5" r="10.5" stroke="#245697" fill="#fff" stroke-width="1.5"/><path d="M1363.5 78 L1373.5 68 L1381 75.5 L1371 85.5 H1365.5 L1362.5 82.5 Z" stroke="#245697" fill="#fff" stroke-width="1.5" stroke-linejoin="round"/><path d="M1373.5 68 L1381.5 60 Q1383 58.5 1384.5 60 L1390 65.5 Q1391.5 67 1390 68.5 L1381 75.5 Z" fill="#d0202e" stroke="#245697" stroke-width="1.3" stroke-linejoin="round"/><path d="M1364 80.5 L1370 85.5" stroke="#245697" stroke-width="1"/><rect x="1411" y="54.5" width="20" height="20" stroke="#8ea6cc" stroke-width="1" stroke-dasharray="2 1.5" fill="#fff"/><rect x="1412" y="65" width="8" height="8" fill="#dbe2ee" stroke="#245697" stroke-width="1.3"/><path d="M1420 65L1429 56M1424 56H1429V61M1412 69H1401M1405 65L1401 69L1405 73M1416 73V85M1412 81L1416 85L1420 81" stroke="#245697" stroke-width="1.5" fill="none"/><path d="M1454.6 61V78M1446 69.5H1463" stroke="#245697" stroke-width="2"/><path d="M1454.6 54L1450 61H1459.2Z M1454.6 85L1450 78H1459.2Z M1439 69.5L1446 65V74Z M1470 69.5L1463 65V74Z" fill="#245697"/><path d="M1491.5 54 A13.5 15.5 0 0 0 1491.5 85 Z" fill="#fff" stroke="#245697" stroke-width="1.1"/><path d="M1496.5 54 A13.5 15.5 0 0 1 1496.5 85 Z" fill="#dbe2ee" stroke="#b7c4d8" stroke-width="1"/><path d="M1494 54V85" stroke="#245697" stroke-width="2" stroke-dasharray="3 1.5"/><path d="M1525 78 L1532 71 L1536 75 L1529 82 Z" fill="#245697"/><circle cx="1523.5" cy="81.5" r="3.5" fill="#fff" stroke="#245697" stroke-width="1.3"/><circle cx="1523.5" cy="81.5" r="1" fill="#245697"/><path d="M1532 71 L1530 67 L1541 56 L1549 64 L1538 75 Z" stroke="#245697" fill="#fff" stroke-width="1.5" stroke-linejoin="round"/><path d="M1538 59L1542 63M1541 57L1544 61M1544 58L1546 62" stroke="#245697" stroke-width="0.7"/><rect x="1230.5" y="99.5" width="29" height="19" stroke="#245697" stroke-width="1.1" fill="#fff"/><text x="1233" y="107.5" font-size="7.5" font-weight="bold" fill="#245697" font-family="Liberation Sans">Tx...</text><rect x="1269.5" y="94.5" width="29" height="28.5" stroke="#245697" fill="#fff" stroke-width="1.5"/><rect x="1269.5" y="94.5" width="29" height="9.5" fill="#245697"/><path d="M1269.5 113.5H1298.5M1279.2 104V123M1289 104V123" stroke="#245697" stroke-width="1.5"/><rect x="1307.5" y="102" width="15" height="14" rx="1.5" stroke="#245697" fill="#fff" stroke-width="1.5"/><path d="M1322.5 106L1330 100M1322.5 109H1331.5M1322.5 112L1330 118" stroke="#245697" stroke-width="1.3"/><circle cx="1335" cy="98" r="3.5" stroke="#245697" fill="#fff" stroke-width="1.5" stroke-width="1.2"/><circle cx="1335" cy="109" r="3.5" stroke="#245697" fill="#fff" stroke-width="1.5" stroke-width="1.2"/><circle cx="1335" cy="121" r="3.5" stroke="#245697" fill="#fff" stroke-width="1.5" stroke-width="1.2"/><rect x="1342" y="109.1" width="6" height="1" fill="#707070"/><path d="M1342 110.8 H1348 L1345 113.6 Z" fill="#707070"/><rect x="1369.5" y="93.5" width="23" height="23" fill="#dbe2ee" stroke="#c0cbdd" stroke-width="1"/><rect x="1361.5" y="101.5" width="23" height="23" stroke="#245697" fill="#fff" stroke-width="1.5"/><rect x="1400.5" y="93.5" width="31" height="31" stroke="#8ea6cc" stroke-width="1" stroke-dasharray="2 1.5" fill="#fff"/><rect x="1401" y="106" width="19" height="18.5" fill="#dbe2ee" stroke="#245697" stroke-width="1.5"/><path d="M1413 106L1429 97M1422 96.5H1429.5V104" stroke="#245697" stroke-width="1.6" fill="none"/><path d="M1466.6 113.3 A13 13 0 1 1 1463.6 99.7" stroke="#245697" stroke-width="3" fill="none" stroke-linecap="round"/><path d="M1461.5 103.8 L1470.3 103.8 L1470.3 95.5 Z" fill="#245697" stroke="#245697" stroke-width="0.8" stroke-linejoin="round"/><path d="M1491.5 93.5 A13.5 15.5 0 0 0 1491.5 124.5 Z" fill="#fff" stroke="#245697" stroke-width="1.1"/><path d="M1497 93.5 A13.5 15.5 0 0 1 1497 124.5" fill="none" stroke="#b7c4d8" stroke-width="1" stroke-dasharray="3 2"/><path d="M1497 95V124" stroke="#d0d8e4" stroke-width="1" stroke-dasharray="3 2"/><path d="M1494 93.5V124.5" stroke="#245697" stroke-width="2" stroke-dasharray="3 1.5"/><g><path d="M1868 62 A15 15 0 1 0 1869 74" stroke="#333" stroke-width="1.6" fill="none"/><path d="M1864 58 L1871 58 L1868 65Z" fill="#333"/><circle cx="1849.65" cy="66.35" r="4.95" stroke="#2aa7e0" stroke-width="1.8" fill="none"/><circle cx="1857.75" cy="66.35" r="4.95" stroke="#e03c31" stroke-width="1.8" fill="none"/><circle cx="1849.65" cy="73.55" r="4.95" stroke="#f0a21b" stroke-width="1.8" fill="none"/><circle cx="1857.75" cy="73.55" r="4.95" stroke="#4cb14a" stroke-width="1.8" fill="none"/></g><circle cx="1886.05" cy="68.15" r="6.050000000000001" stroke="#2aa7e0" stroke-width="2.2" fill="none"/><circle cx="1895.95" cy="68.15" r="6.050000000000001" stroke="#e03c31" stroke-width="2.2" fill="none"/><circle cx="1886.05" cy="76.95" r="6.050000000000001" stroke="#f0a21b" stroke-width="2.2" fill="none"/><circle cx="1895.95" cy="76.95" r="6.050000000000001" stroke="#4cb14a" stroke-width="2.2" fill="none"/><path d="M1893 63 Q1897 56 1905 56" stroke="#333" stroke-width="2.2" fill="none"/><path d="M1903 52 L1910 56 L1903 60Z" fill="#333"/><rect x="1673.5" y="28" width="1" height="21" fill="#a9a9a9"/><rect x="1864" y="28" width="1" height="21" fill="#a9a9a9"/><circle cx="1692" cy="36" r="5.5" stroke="#111" stroke-width="1.5" fill="none"/><path d="M1696 40L1699.5 43.5" stroke="#111" stroke-width="2.2"/><path d="M1690 35 Q1684 36 1686 44" stroke="#1450d8" stroke-width="2" fill="none"/><path d="M1683 41L1686 46L1689 41Z" fill="#1450d8"/><circle cx="1716" cy="36" r="5.5" stroke="#111" stroke-width="1.5" fill="#fff"/><path d="M1720 40L1723.5 43.5" stroke="#111" stroke-width="2.2"/><path d="M1716 31V41M1711 36H1721" stroke="#1450d8" stroke-width="1.2"/><path d="M1716 30L1714 32.5H1718ZM1716 42L1714 39.5H1718ZM1710 36L1712.5 34V38ZM1722 36L1719.5 34V38Z" fill="#1450d8"/><circle cx="1742" cy="36" r="5.5" stroke="#111" stroke-width="1.5" fill="#fff"/><path d="M1746 40L1749.5 43.5" stroke="#111" stroke-width="2.2"/><text x="1737.5" y="39" font-size="7" fill="#1450d8" font-family="Liberation Sans">×2</text><path d="M1776 33 A7 7 0 1 0 1775 42" stroke="#1450d8" stroke-width="1.8" fill="none"/><path d="M1773 29L1779 31L1775 35Z" fill="#1450d8"/><path d="M1770 45L1778 37L1780 39L1772 47Z" fill="#e8c21c" stroke="#333" stroke-width="0.5"/><rect x="1787.5" y="35.5" width="8" height="9" stroke="#1450d8" stroke-width="1" stroke-dasharray="1 1" fill="none"/><circle cx="1796" cy="35" r="5.5" stroke="#111" stroke-width="1.5" fill="none"/><path d="M1800 39L1803.5 42.5" stroke="#111" stroke-width="2.2"/><g stroke="#111" stroke-width="0.9" fill="#fff"><rect x="1817" y="31.5" width="2.4" height="9" rx="1.2"/><rect x="1819.6" y="30.5" width="2.4" height="10" rx="1.2"/><rect x="1822.2" y="31.5" width="2.4" height="9" rx="1.2"/><rect x="1824.8" y="33" width="2.2" height="8" rx="1.1"/><path d="M1817 37 L1815.5 35.5 Q1814 35 1814 36.5 L1816 42 Q1818 46 1822 46 Q1827 46 1827 41 L1827 38 L1817 38 Z"/></g><path d="M1817.6 38.5H1826.5" stroke="#fff" stroke-width="1.5"/><rect x="1839.5" y="29.5" width="14" height="13" stroke="#111" stroke-width="1" fill="#fff"/><rect x="1839.5" y="29.5" width="14" height="3" fill="#4aa3df"/><rect x="1845" y="37" width="8" height="8" fill="#fff" stroke="#111" stroke-width="1"/><path d="M1841 34 L1849 42M1846 42H1849V39" stroke="#1450d8" stroke-width="1.5" fill="none"/><defs><radialGradient id="gl" cx="0.4" cy="0.35" r="0.7"><stop offset="0" stop-color="#7cc4ff"/><stop offset="0.6" stop-color="#1f78e0"/><stop offset="1" stop-color="#0b3d9a"/></radialGradient></defs><circle cx="1879.6" cy="37.7" r="8" fill="url(#gl)"/><path d="M1874 33 Q1877 32 1878 35 Q1876 37 1878 40 Q1880 42 1879 45 Q1876 43 1875 40 Q1872 37 1874 33Z M1882 31 Q1886 33 1886 37 Q1883 36 1882 33Z" fill="#e8f4ff" opacity="0.85"/><path d="M1889 40L1891 40L1890 41.5Z" fill="#888"/><path d="M1897 36 L1907 30 L1913 34 L1903 40 Z" fill="#7a1f9a"/><path d="M1897 36 L1903 40 V45 L1897 41 Z" fill="#4c0f66"/><path d="M1903 40 L1913 34 V39 L1903 45 Z" fill="#eee" stroke="#333" stroke-width="0.5"/><text x="1903" y="37" font-size="6" fill="#ffd400" font-family="Liberation Sans" font-weight="bold">?</text><path d="M1915 41L1917 41L1916 42.5Z" fill="#888"/></svg>
<div class="t" style="left:4.60px;top:91.0px;font-size:12px;color:#2a2a2a;transform:scaleX(0.9541);transform-origin:0 0;">Catalogues</div>
<div class="t" style="left:70.50px;top:91.0px;font-size:12px;color:#2a2a2a;transform:scaleX(1.0324);transform-origin:0 0;">Configuration</div>
<div class="t" style="left:165.00px;top:91.0px;font-size:12px;color:#2a2a2a;transform:scaleX(0.9600);transform-origin:0 0;">Cost</div>
<div class="t" style="left:151.50px;top:106.5px;font-size:12px;color:#2a2a2a;transform:scaleX(0.9327);transform-origin:0 0;">databases</div>
<div class="t" style="left:86.50px;top:131.1px;font-size:12px;color:#2a2a2a;transform:scaleX(0.9053);transform-origin:0 0;">Project</div>
<div class="t" style="left:342.80px;top:131.1px;font-size:12px;color:#2a2a2a;transform:scaleX(0.9139);transform-origin:0 0;">Coaxial cable</div>
<div class="t" style="left:609.60px;top:131.1px;font-size:12px;color:#2a2a2a;transform:scaleX(0.9714);transform-origin:0 0;">Fibre optic</div>
<div class="t" style="left:764.30px;top:131.1px;font-size:12px;color:#2a2a2a;transform:scaleX(0.9329);transform-origin:0 0;">Twisted pairs</div>
<div class="t" style="left:921.30px;top:131.1px;font-size:12px;color:#2a2a2a;transform:scaleX(0.9625);transform-origin:0 0;">Supports</div>
<div class="t" style="left:1045.40px;top:131.1px;font-size:12px;color:#2a2a2a;transform:scaleX(0.9340);transform-origin:0 0;">Cabinets</div>
<div class="t" style="left:1113.40px;top:131.1px;font-size:12px;color:#2a2a2a;transform:scaleX(0.9967);transform-origin:0 0;">Networking</div>
<div class="t" style="left:1182.20px;top:131.1px;font-size:12px;color:#2a2a2a;transform:scaleX(0.9528);transform-origin:0 0;">Others</div>
<div class="t" style="left:1373.70px;top:131.1px;font-size:12px;color:#2a2a2a;transform:scaleX(0.9839);transform-origin:0 0;">Editor</div>
<div class="t" style="left:1831.00px;top:131.1px;font-size:12px;color:#2a2a2a;transform:scaleX(0.9286);transform-origin:0 0;">BIMserver.center</div>
<div class="t" style="left:1835.00px;top:91.0px;font-size:12px;color:#2a2a2a;transform:scaleX(0.9744);transform-origin:0 0;">Update</div>
<div class="t" style="left:1881.00px;top:91.0px;font-size:12px;color:#2a2a2a;transform:scaleX(0.9062);transform-origin:0 0;">Share</div>
<div class="a" style="left:8px;top:152px;width:474px;height:872px;background:#d9d9d9;border:1px solid #c4c4c4"></div>
<div class="a" style="left:12px;top:180px;width:466px;height:840px;background:#fff"></div>
<svg class="a" style="left:0;top:0" width="520" height="200" viewBox="0 0 520 200"><path d="M19 167.5H29M24 162.5V172.5" stroke="#333" stroke-width="1.6"/><path d="M42 174 L43.5 169 L53 159.5 L56 162.5 L46.5 172 Z" fill="#f0c94a" stroke="#666" stroke-width="0.8"/><path d="M42 174 L43.5 169 L46.5 172Z" fill="#fff" stroke="#666" stroke-width="0.8"/><rect x="66.5" y="165.5" width="7" height="8" fill="#c5c5c5" stroke="#aaa" stroke-width="1"/><rect x="70.5" y="161.5" width="8" height="8" fill="#e0e0e0" stroke="#aaa" stroke-width="1"/><path d="M93 161.5L104.5 173M104.5 161.5L93 173" stroke="#d94a4a" stroke-width="2.2"/><rect x="115" y="157" width="1" height="22" fill="#a9a9a9"/><rect x="173" y="157" width="1" height="22" fill="#a9a9a9"/><rect x="424" y="157" width="1" height="22" fill="#a9a9a9"/><path d="M126.5 170.5H137.5L132 164.5Z" fill="#111"/><path d="M151.3 165.5H162.3L156.8 171.5Z" fill="#111"/><path d="M435.9 170.5H446.9L441.4 164.5Z" fill="#111"/><path d="M459.9 165.5H470.9L465.4 171.5Z" fill="#111"/></svg>
<div class="a" style="left:12px;top:180px;width:465px;height:22px;background:#f0f0f0"></div>
<div class="a" style="left:12px;top:202px;width:465px;height:1px;background:#e3e3e3"></div>
<div class="a" style="left:421px;top:183px;width:1px;height:19px;background:#dcdcdc"></div>
<div class="t" style="left:18.0px;top:186.0px;font-size:12px;color:#111;">Schematic diagrams</div>
<div class="t" style="left:149.0px;width:600px;text-align:center;top:186.0px;font-size:12px;color:#111;">Analysis</div>
<div class="a" style="left:12px;top:222px;width:465px;height:1px;background:#f0f0f0"></div>
<div class="a" style="left:421px;top:203px;width:1px;height:19px;background:#f0f0f0"></div>
<div class="t" style="left:18.0px;top:207.1px;font-size:12px;color:#111;">Infrastructure</div>
<div class="a" style="left:12px;top:242px;width:465px;height:1px;background:#f0f0f0"></div>
<div class="a" style="left:421px;top:223px;width:1px;height:19px;background:#f0f0f0"></div>
<div class="t" style="left:18.0px;top:227.1px;font-size:12px;color:#111;">Network diagram for S/MATV coaxial cables</div>
<div class="a" style="left:12px;top:262px;width:465px;height:1px;background:#f0f0f0"></div>
<div class="a" style="left:421px;top:243px;width:1px;height:19px;background:#f0f0f0"></div>
<div class="t" style="left:18.0px;top:247.1px;font-size:12px;color:#111;">Network diagram for S/CATV coaxial cables</div>
<div class="a" style="left:12px;top:282px;width:465px;height:1px;background:#f0f0f0"></div>
<div class="a" style="left:421px;top:263px;width:1px;height:19px;background:#f0f0f0"></div>
<div class="t" style="left:18.0px;top:267.1px;font-size:12px;color:#111;">Network diagram for fibre optic cables</div>
<div class="a" style="left:12px;top:302px;width:465px;height:1px;background:#f0f0f0"></div>
<div class="a" style="left:421px;top:283px;width:1px;height:19px;background:#f0f0f0"></div>
<div class="t" style="left:18.0px;top:287.1px;font-size:12px;color:#111;">Network diagram for twisted pair cables</div>
<div class="a" style="left:12px;top:303px;width:465px;height:19px;background:#cce8ff"></div>
<div class="a" style="left:12px;top:322px;width:465px;height:1px;background:#f0f0f0"></div>
<div class="a" style="left:421px;top:303px;width:1px;height:19px;background:#dceefc"></div>
<div class="t" style="left:18.0px;top:307.1px;font-size:12px;color:#111;">S/MATV network start</div>
<svg class="a" style="left:0;top:0" width="520" height="400" viewBox="0 0 520 400"><circle cx="449" cy="212.8" r="8" fill="#3fa535"/><path d="M445 212.8L448 216L453.5 209" stroke="#fff" stroke-width="2" fill="none"/><circle cx="449" cy="232.8" r="8" fill="#3fa535"/><path d="M445 232.8L448 236L453.5 229" stroke="#fff" stroke-width="2" fill="none"/><circle cx="449" cy="252.8" r="8" fill="#3fa535"/><path d="M445 252.8L448 256L453.5 249" stroke="#fff" stroke-width="2" fill="none"/><circle cx="449" cy="272.8" r="8" fill="#3fa535"/><path d="M445 272.8L448 276L453.5 269" stroke="#fff" stroke-width="2" fill="none"/><circle cx="449" cy="292.8" r="8" fill="#3fa535"/><path d="M445 292.8L448 296L453.5 289" stroke="#fff" stroke-width="2" fill="none"/><circle cx="449" cy="312.8" r="8" fill="#3fa535"/><path d="M445 312.8L448 316L453.5 309" stroke="#fff" stroke-width="2" fill="none"/></svg>
<svg class="a" style="left:484px;top:578px" width="4" height="20" viewBox="0 0 4 20"><rect x="1" y="3" width="2" height="2" fill="#8a8a8a"/><rect x="1" y="7" width="2" height="2" fill="#8a8a8a"/><rect x="1" y="11" width="2" height="2" fill="#8a8a8a"/><rect x="1" y="15" width="2" height="2" fill="#8a8a8a"/></svg>
<svg class="a" style="left:0;top:0" width="520" height="400" viewBox="0 0 520 400"><rect x="494" y="155" width="22.5" height="23" rx="3.5" fill="#ddeaf4" stroke="#cfe0ee" stroke-width="1"/><rect x="499.5" y="161" width="10" height="10.5" stroke="#333" stroke-width="1.8" fill="#e4f0f8"/><path d="M498 182.5V200M505 182.5V200M512 182.5V200M496.5 185H513.5M496.5 191.2H513.5M496.5 197.4H513.5" stroke="#444" stroke-width="1"/><rect x="501" y="210.5" width="6" height="6" stroke="#444" stroke-width="1" fill="none"/><rect x="503.5" y="213" width="1" height="1" fill="#444"/><path d="M497 207.5h1M503.5 207.5h1M510 207.5h1M497 213.5h1M510 213.5h1M497 219.5h1M503.5 219.5h1M510 219.5h1" stroke="#444" stroke-width="1"/><rect x="497" y="233.5" width="16" height="9" rx="1" fill="#444"/><rect x="498.5" y="235" width="1.3" height="1.3" fill="#f4f4f4"/><rect x="499.5" y="237.3" width="1.3" height="1.3" fill="#f4f4f4"/><rect x="500.6" y="235" width="1.3" height="1.3" fill="#f4f4f4"/><rect x="501.6" y="237.3" width="1.3" height="1.3" fill="#f4f4f4"/><rect x="502.7" y="235" width="1.3" height="1.3" fill="#f4f4f4"/><rect x="503.7" y="237.3" width="1.3" height="1.3" fill="#f4f4f4"/><rect x="504.8" y="235" width="1.3" height="1.3" fill="#f4f4f4"/><rect x="505.8" y="237.3" width="1.3" height="1.3" fill="#f4f4f4"/><rect x="506.9" y="235" width="1.3" height="1.3" fill="#f4f4f4"/><rect x="507.9" y="237.3" width="1.3" height="1.3" fill="#f4f4f4"/><rect x="509.0" y="235" width="1.3" height="1.3" fill="#f4f4f4"/><rect x="510.0" y="237.3" width="1.3" height="1.3" fill="#f4f4f4"/><rect x="500" y="239.6" width="10" height="1.3" fill="#f4f4f4"/><rect x="498" y="255.5" width="14" height="8" stroke="#444" stroke-width="0.9" fill="#fff"/><text x="499.3" y="262.3" font-size="6.5" font-weight="bold" fill="#444" font-family="Liberation Sans">1.00</text><path d="M497.5 267H512.5M497.5 265.5V268.5M512.5 265.5V268.5" stroke="#444" stroke-width="1"/><path d="M499 281V293H512M499 286 Q504 287 504.5 293" stroke="#444" stroke-width="1.2" fill="none"/><circle cx="505" cy="290" r="1" fill="#444"/><circle cx="505" cy="311" r="6" stroke="#444" stroke-width="1.2" fill="none"/><path d="M505 311L510 305" stroke="#444" stroke-width="1.1"/><rect x="498.5" y="327.5" width="3" height="2.5" stroke="#444" stroke-width="0.9" fill="#fff"/><rect x="507.5" y="327.5" width="3" height="2.5" stroke="#444" stroke-width="0.9" fill="#fff"/><path d="M502 328.7h5" stroke="#444" stroke-width="1"/><rect x="499" y="332" width="13" height="11" stroke="#222" stroke-width="1.2" stroke-dasharray="1.3 1.3" fill="none"/><rect x="501.5" y="334.5" width="3" height="2.5" stroke="#e0602a" stroke-width="0.9" fill="#fff"/><rect x="506" y="338.5" width="3" height="2.5" stroke="#e0602a" stroke-width="0.9" fill="#fff"/><path d="M503 337v2.5h3" stroke="#e0602a" stroke-width="0.8" fill="none"/><path d="M499 365 L510 354" stroke="#444" stroke-width="2"/><path d="M508 352.5 Q512 351 513 355 L510.5 357.5 L507.5 354.5Z" fill="#444"/><path d="M500 354 L511 365" stroke="#444" stroke-width="1.6"/><path d="M498 352.5 L501 353 L501.5 356 Z" fill="#444"/><circle cx="511" cy="365" r="1.8" fill="none" stroke="#444" stroke-width="1"/></svg>
<div class="a" style="left:520px;top:152px;width:1392px;height:872px;background:#fff"></div>
<div class="t" style="left:711.70px;top:188.7px;font-size:27px;color:#151515;transform:scaleX(0.9636);transform-origin:0 0;">A4 - Landscape (297x210) mm</div>
<svg class="a" style="left:0;top:0" width="1920" height="1032" viewBox="0 0 1920 1032"><rect x="675.5" y="218.5" width="1082" height="765" stroke="#000" stroke-width="1.4" fill="none"/><path d="M711.5 272.5H1721.5" stroke="#000" stroke-width="1.6" stroke-dasharray="9 6 3 6" fill="none" stroke-dashoffset="19.5"/><path d="M711.5 272.5V929.5" stroke="#000" stroke-width="1.6" stroke-dasharray="9 6 3 6" fill="none" stroke-dashoffset="13.5"/><path d="M1721.5 272.5V929.5" stroke="#000" stroke-width="1.6" stroke-dasharray="9 6 3 6" fill="none" stroke-dashoffset="21.5"/><path d="M711.5 929.5H1721.5" stroke="#000" stroke-width="1.6" stroke-dasharray="9 6 3 6" fill="none" stroke-dashoffset="0"/><path d="M749.5 393V541.5H1162.5V612" stroke="#d0141a" stroke-width="1.3" fill="none"/><path d="M1002.9 393V495H1180.5V612" stroke="#d0141a" stroke-width="1.3" fill="none"/><path d="M1162 411V461H1342.4V612" stroke="#d0141a" stroke-width="1.3" fill="none"/><path d="M1509.5 459V553H1359.4V612" stroke="#d0141a" stroke-width="1.3" fill="none"/><path d="M1706.5 458V567H1377.2V612" stroke="#d0141a" stroke-width="1.3" fill="none"/><path d="M1340.6 700V735H1328V776" stroke="#d0141a" stroke-width="1.3" fill="none"/><path d="M1358.6 700V748H1341.5V776" stroke="#d0141a" stroke-width="1.3" fill="none"/><path d="M1377.8 700V751H1354.5V776" stroke="#d0141a" stroke-width="1.3" fill="none"/><path d="M1329 811V867.5" stroke="#d0141a" stroke-width="1.3" fill="none"/><path d="M1355.5 811V867.5" stroke="#aaa" stroke-width="1.2"/><path d="M741.40 377.30 L741.57 376.00 L742.07 374.70 L742.90 373.41 L744.06 372.15 L745.54 370.90 L747.33 369.69 L749.43 368.52 L751.82 367.39 L754.50 366.31 L757.45 365.28 L760.65 364.31 L764.10 363.40 L767.77 362.56 L771.64 361.80 L775.70 361.11 L779.93 360.49 L784.30 359.96 L788.80 359.52 L793.40 359.16 L798.09 358.88 L802.83 358.70 L807.61 358.61 L812.39 358.61 L817.17 358.70 L821.91 358.88 L826.60 359.16 L831.20 359.52 L835.70 359.96 L840.07 360.49 L844.30 361.11 L848.36 361.80 L852.23 362.56 L855.90 363.40 L859.35 364.31 L862.55 365.28 L865.50 366.31 L868.18 367.39 L870.57 368.52 L872.67 369.69 L874.46 370.90" stroke="#1a1a1a" stroke-width="0.8" fill="none"/><path d="M743.60 377.30 L743.76 376.15 L744.25 375.00 L745.05 373.87 L746.17 372.75 L747.60 371.66 L749.34 370.59 L751.37 369.55 L753.69 368.56 L756.28 367.60 L759.13 366.69 L762.24 365.84 L765.57 365.04 L769.12 364.30 L772.87 363.62 L776.80 363.01 L780.89 362.47 L785.13 362.00 L789.48 361.61 L793.94 361.29 L798.47 361.05 L803.06 360.89 L807.68 360.81 L812.32 360.81 L816.94 360.89 L821.53 361.05 L826.06 361.29 L830.52 361.61 L834.87 362.00 L839.11 362.47 L843.20 363.01 L847.13 363.62 L850.88 364.30 L854.43 365.04 L857.76 365.84 L860.87 366.69 L863.72 367.60 L866.31 368.56 L868.63 369.55 L870.66 370.59 L872.40 371.66" stroke="#1a1a1a" stroke-width="0.8" fill="none"/><path d="M876.26 372.46 L877.17 373.51 L877.86 374.57 L878.33 375.64 L878.57 376.71 L878.58 377.79 L878.36 378.86 L877.92 379.93 L877.25 381.00 L876.35 382.05 L875.24 383.08 L873.91 384.09 L872.37 385.08 L870.63 386.05 L868.68 386.99 L866.54 387.89 L864.20 388.76 L861.69 389.59 L859.01 390.38 L856.17 391.13 L853.17 391.83 L850.03 392.49 L846.76 393.09 L843.36 393.64 L839.86 394.14 L836.25 394.58 L832.56 394.96 L828.79 395.28 L824.96 395.55 L821.09 395.75 L817.17 395.90 L813.23 395.98 L809.28 396.00 L805.33 395.96 L801.40 395.85 L797.50 395.69 L793.64 395.46 L789.83 395.17 L786.09 394.83 L782.43 394.42 L778.86 393.96" stroke="#1a1a1a" stroke-width="0.8" fill="none"/><path d="M874.14 373.03 L875.02 373.95 L875.69 374.89 L876.14 375.83 L876.37 376.78 L876.38 377.73 L876.17 378.68 L875.74 379.62 L875.09 380.56 L874.23 381.49 L873.15 382.40 L871.86 383.29 L870.37 384.17 L868.68 385.02 L866.80 385.85 L864.72 386.65 L862.47 387.41 L860.04 388.15 L857.44 388.84 L854.69 389.50 L851.79 390.12 L848.75 390.70 L845.58 391.23 L842.29 391.72 L838.90 392.16 L835.41 392.54 L831.84 392.88 L828.19 393.17 L824.48 393.40 L820.73 393.58 L816.94 393.71 L813.13 393.78 L809.30 393.80 L805.48 393.76 L801.68 393.67 L797.90 393.52 L794.16 393.32 L790.48 393.07 L786.85 392.77 L783.31 392.41 L779.86 392.00" stroke="#1a1a1a" stroke-width="0.8" fill="none"/><path d="M756.95 382.35 L758.41 381.52 L760.01 380.70 L761.76 379.91 L763.64 379.15 L765.65 378.41 L767.80 377.71 L770.06 377.04 L772.44 376.40 L774.93 375.79 L777.53 375.22 L780.22 374.69 L783.00 374.20 L785.87 373.76 L788.81 373.35 L791.82 372.98 L794.90 372.66 L798.02 372.39 L801.19 372.16 L804.39 371.97 L807.63 371.84 L810.88 371.75 L814.15 371.70 L817.42 371.71 L820.68 371.76 L823.93 371.86 L827.16 372.00 L830.36 372.19 L833.52 372.43 L836.64 372.72 L839.70 373.04 L842.70 373.42 L845.63 373.83 L848.48 374.29 L851.25 374.78 L853.93 375.32 L856.50 375.89 L858.98 376.50 L861.34 377.15 L863.58 377.83 L865.70 378.54" stroke="#1a1a1a" stroke-width="0.8" fill="none"/><path d="M758.95 383.28 L760.35 382.55 L761.90 381.83 L763.59 381.13 L765.40 380.46 L767.35 379.81 L769.42 379.19 L771.61 378.60 L773.91 378.04 L776.32 377.50 L778.82 377.00 L781.42 376.54 L784.11 376.11 L786.88 375.71 L789.72 375.35 L792.63 375.03 L795.60 374.75 L798.61 374.51 L801.68 374.30 L804.77 374.14 L807.90 374.02 L811.04 373.94 L814.19 373.90 L817.35 373.91 L820.50 373.95 L823.64 374.04 L826.76 374.17 L829.86 374.34 L832.91 374.55 L835.92 374.79 L838.88 375.08 L841.77 375.41 L844.60 375.78 L847.36 376.18 L850.03 376.62 L852.62 377.09 L855.11 377.59 L857.50 378.13 L859.78 378.70 L861.95 379.30 L863.99 379.92" stroke="#1a1a1a" stroke-width="0.8" fill="none"/><path d="M878.69 386.31 L879.46 387.57 L879.93 388.83 L880.10 390.10 L879.96 391.37 L879.51 392.64 L878.76 393.89 L877.71 395.13 L876.36 396.34 L874.72 397.52 L872.80 398.67 L870.61 399.78 L868.16 400.84 L865.45 401.85 L862.51 402.80 L859.35 403.70 L855.98 404.53 L852.41 405.29 L848.67 405.98 L844.78 406.60 L840.74 407.13 L836.58 407.59 L832.33 407.96 L827.99 408.25 L823.60 408.45 L819.16 408.57 L814.71 408.60 L810.26 408.54 L805.84 408.39 L801.46 408.16 L797.15 407.84 L792.93 407.44 L788.81 406.95 L784.82 406.39 L780.98 405.75 L777.30 405.03 L773.80 404.24 L770.50 403.39 L767.42 402.47 L764.56 401.50 L761.94 400.47" stroke="#1a1a1a" stroke-width="0.8" fill="none"/><path d="M876.54 386.77 L877.29 387.87 L877.74 388.99 L877.90 390.11 L877.76 391.23 L877.33 392.34 L876.60 393.45 L875.59 394.53 L874.28 395.60 L872.70 396.64 L870.85 397.65 L868.73 398.63 L866.36 399.56 L863.75 400.45 L860.91 401.29 L857.86 402.08 L854.60 402.81 L851.16 403.49 L847.54 404.09 L843.78 404.64 L839.88 405.11 L835.87 405.51 L831.76 405.84 L827.57 406.09 L823.32 406.27 L819.04 406.37 L814.74 406.40 L810.44 406.35 L806.17 406.22 L801.94 406.01 L797.78 405.73 L793.70 405.38 L789.72 404.95 L785.87 404.45 L782.16 403.89 L778.60 403.25 L775.22 402.56 L772.04 401.81 L769.05 401.00 L766.29 400.14 L763.77 399.24" stroke="#1a1a1a" stroke-width="0.8" fill="none"/><path d="M873 370 Q872 377 866 380.5 M875 371.5 Q874 379 867.5 382" stroke="#1a1a1a" stroke-width="0.8" fill="none"/><path d="M874.5 373 Q876 370 878.5 372 M877 376 Q878.5 380 877.5 387 M879.5 376 Q881 381 879.8 388" stroke="#1a1a1a" stroke-width="0.8" fill="none"/><path d="M862 378 L867 382" stroke="#1a1a1a" stroke-width="0.6"/><g stroke="#1a1a1a" stroke-width="0.9" fill="#fff">
<path d="M716 387 Q722 382 732 383 L742 381 Q750 382 756 386 L770 389 Q779 391 779 396 Q777 402 768 403 L752 404 Q744 405 738 404 L728 405 Q720 404 718 398 Z" fill="#fff"/>
</g><g stroke="#1a1a1a" stroke-width="0.8" fill="none">
<path d="M720 386 h16 q3 0 3 3 v4 q0 3 -3 3 h-16"/>
<ellipse cx="733" cy="399" rx="5" ry="3.5"/>
<path d="M742 381 L760 395 M745 379 L763 393 M748 377 L764 390"/>
<path d="M756 392 Q766 388 778 393 M754 398 Q766 395 779 397"/>
<ellipse cx="768" cy="397" rx="8" ry="4.5"/>
<circle cx="757" cy="401" r="2.8"/>
<path d="M741 394 Q744 388 750 389 M746 399 l6 -2"/>
</g><path d="M716 387 l3 -2 M719 394 l2 3 M737 388h5 M760 400 l8 -2 M750 397 l4 4 M752 386 l8 6" stroke="#1a1a1a" stroke-width="1.3"/><path d="M743 384 l4 3 M748 388 l3 -2" stroke="#1a1a1a" stroke-width="1.6"/><rect x="927.5" y="390.5" width="116" height="4" stroke="#1a1a1a" stroke-width="0.8" fill="none" fill="#fff"/><rect x="952.7" y="305" width="2" height="174" stroke="#1a1a1a" stroke-width="0.8" fill="none" fill="#fff"/><rect x="1001.6" y="320.8" width="3.2" height="142.7" rx="1.5" stroke="#1a1a1a" stroke-width="0.8" fill="none" fill="#fff"/><rect x="1034" y="330.9" width="3" height="122.5" rx="1.5" stroke="#1a1a1a" stroke-width="0.8" fill="none" fill="#fff"/><ellipse cx="1003.8" cy="392.5" rx="7.5" ry="8.5" stroke="#1a1a1a" stroke-width="1" fill="#fff"/><path d="M988 389 L996 390 L996 395 L988 396 Z M951 390.5h5v4h-5zM1033 390.5h5v4h-5z" stroke="#1a1a1a" stroke-width="0.9" fill="#fff"/><path d="M999 386 Q1004 384 1008 388 M998 398 Q1004 401 1009 397 M997 392 L1001 388 M1007 396 L1010 391 M999 395 l3 2" stroke="#1a1a1a" stroke-width="1.3" fill="none"/><path d="M986 389.5 L996 388 L998 392 L996 396.5 L986 395" stroke="#1a1a1a" stroke-width="1.1" fill="#fff"/><path d="M989 390 l3 5 M993 390 l2 4" stroke="#1a1a1a" stroke-width="0.9"/><path d="M931 394.5 H949 V405 Q940 408 931 405 Z" stroke="#1a1a1a" stroke-width="0.8" fill="none" fill="#fff"/><path d="M935 394.5 Q940 400 945 394.5 M933 405v10M947 405v10" stroke="#1a1a1a" stroke-width="0.8" fill="none"/><rect x="936" y="390" width="9" height="5" stroke="#1a1a1a" stroke-width="0.8" fill="none" fill="#fff"/><text x="1026" y="319" font-size="3" fill="#666" font-family="Liberation Sans">xxxx xxx</text><path d="M1002.3 463.5 V468" stroke="#1a1a1a" stroke-width="0.8" fill="none"/><path d="M1155.6 297.6 Q1130 322 1118 352 Q1108 368 1105 376 Q1104 380 1108 382" stroke="#1a1a1a" stroke-width="0.9" fill="none"/><path d="M1157.5 299.5 Q1133 324 1121 354 Q1111 370 1108.5 378" stroke="#1a1a1a" stroke-width="0.9" fill="none"/><path d="M1179.5 311.4 Q1155 340 1143 363 Q1133 382 1127.9 394.5" stroke="#1a1a1a" stroke-width="0.9" fill="none"/><path d="M1182 313 Q1158 342 1146 365 Q1136 384 1131 396" stroke="#1a1a1a" stroke-width="0.9" fill="none"/><path d="M1197.1 331 Q1180 352 1170.7 368.7 Q1160 390 1150.5 411" stroke="#1a1a1a" stroke-width="0.9" fill="none"/><path d="M1155.6 297.6 L1197.1 331 M1156.3999999999999 299.20000000000005 L1197.8999999999999 332.6" stroke="#1a1a1a" stroke-width="0.7" fill="none"/><path d="M1137 317.7 L1180.8 351.7 M1137.8 319.3 L1181.6 353.3" stroke="#1a1a1a" stroke-width="0.7" fill="none"/><path d="M1127 336 L1170.7 368.7 M1127.8 337.6 L1171.5 370.3" stroke="#1a1a1a" stroke-width="0.7" fill="none"/><path d="M1118 353.6 L1162 386 M1118.8 355.20000000000005 L1162.8 387.6" stroke="#1a1a1a" stroke-width="0.7" fill="none"/><path d="M1111 365.6 L1156 399 M1111.8 367.20000000000005 L1156.8 400.6" stroke="#1a1a1a" stroke-width="0.7" fill="none"/><path d="M1105.5 375.6 L1150 409 M1106.3 377.20000000000005 L1150.8 410.6" stroke="#1a1a1a" stroke-width="0.7" fill="none"/><circle cx="1197" cy="331" r="1.3" fill="#1a1a1a"/><circle cx="1180.5" cy="352" r="1.2" fill="#1a1a1a"/><circle cx="1170.5" cy="369" r="1" fill="#1a1a1a"/><path d="M1131 389 Q1136 379 1152 379 L1172 380 Q1186 382 1184 394 Q1182 405 1170 406 L1150 404 Q1133 402 1131 389 Z" stroke="#1a1a1a" stroke-width="1" fill="none"/><path d="M1135 389 Q1140 383 1152 383 L1166 384" stroke="#1a1a1a" stroke-width="0.6" fill="none"/><path d="M1169 381 Q1162 392 1168 405" stroke="#1a1a1a" stroke-width="0.8" fill="none"/><text x="1135" y="396" font-size="6" fill="#222" font-family="Liberation Sans" transform="rotate(-12 1135 396)">BU</text><path d="M1123.5 387.5 Q1118 402 1128 416" stroke="#1a1a1a" stroke-width="2.2" fill="none"/><path d="M1126 387 Q1121 402 1131 416" stroke="#1a1a1a" stroke-width="0.7" fill="none"/><circle cx="1127.5" cy="402.5" r="3.2" stroke="#1a1a1a" stroke-width="1.1" fill="#fff"/><circle cx="1127.5" cy="402.5" r="1.2" fill="#1a1a1a"/><path d="M1155 397 Q1160 404 1170 401 M1152 410 L1158 398 M1180 408 l4 -6 M1170 384 l10 6" stroke="#1a1a1a" stroke-width="1.1" fill="none"/><ellipse cx="1165.5" cy="406.5" rx="6" ry="5" stroke="#1a1a1a" stroke-width="1.1" fill="#fff"/><path d="M1163 407 q3 -3 5 -1" stroke="#1a1a1a" stroke-width="1.6" fill="none"/><circle cx="1184.5" cy="393.5" r="1.5" fill="#1a1a1a"/><circle cx="1150.5" cy="412" r="1" fill="#1a1a1a"/><g stroke="#1a1a1a" stroke-width="0.9" fill="none">
<path d="M1090 400 L1105 396 L1120 394 M1092 409 L1108 407 L1121 406"/>
<path d="M1098 397 Q1093 404 1098 410 Q1104 412 1106 406 Q1107 399 1100 397"/>
<path d="M1107 398 h7 v5 h-7z"/>
<path d="M1106 390 L1120 400 M1107 388 L1121 398"/>
</g><path d="M1086 397.5 L1094 404 M1090 392 l1 5 M1086 404 l4 -3" stroke="#1a1a1a" stroke-width="1.5"/><path d="M1173 381 Q1192 368 1210 360 Q1225 354 1294 347.8 L1296 352" stroke="#1a1a1a" stroke-width="0.9" fill="none"/><path d="M1180 386 Q1198 373 1214 365 Q1228 359 1296 352" stroke="#1a1a1a" stroke-width="0.9" fill="none"/><path d="M1184 388 L1236.8 381 L1238 385 L1184 393" stroke="#1a1a1a" stroke-width="0.9" fill="none"/><path d="M1180 404.4 Q1198 410 1215 411 Q1240 408 1297.3 395 L1298 399" stroke="#1a1a1a" stroke-width="0.9" fill="none"/><path d="M1183 408 Q1200 414 1216 415 Q1240 412 1298 399" stroke="#1a1a1a" stroke-width="0.9" fill="none"/><path d="M1212 354 L1228 366 M1213.4 353 L1229.4 365" stroke="#1a1a1a" stroke-width="0.8"/><circle cx="1228.7" cy="365.7" r="0.9" fill="#1a1a1a"/><path d="M1247 346 L1262 359 M1248.4 345 L1263.4 358" stroke="#1a1a1a" stroke-width="0.8"/><circle cx="1262.7" cy="358.7" r="0.9" fill="#1a1a1a"/><path d="M1281 342 L1297 353 M1282.4 341 L1298.4 352" stroke="#1a1a1a" stroke-width="0.8"/><circle cx="1297.7" cy="352.7" r="0.9" fill="#1a1a1a"/><path d="M1181 369 L1209 393 M1182.4 368 L1210.4 392" stroke="#1a1a1a" stroke-width="0.8"/><circle cx="1209.7" cy="392.7" r="0.9" fill="#1a1a1a"/><path d="M1225 376 L1240 388 M1226.4 375 L1241.4 387" stroke="#1a1a1a" stroke-width="0.8"/><circle cx="1240.7" cy="387.7" r="0.9" fill="#1a1a1a"/><path d="M1216 403 L1232 416 M1217.4 402 L1233.4 415" stroke="#1a1a1a" stroke-width="0.8"/><circle cx="1232.7" cy="415.7" r="0.9" fill="#1a1a1a"/><path d="M1250 396 L1266 408 M1251.4 395 L1267.4 407" stroke="#1a1a1a" stroke-width="0.8"/><circle cx="1266.7" cy="407.7" r="0.9" fill="#1a1a1a"/><path d="M1284 389 L1300 401 M1285.4 388 L1301.4 400" stroke="#1a1a1a" stroke-width="0.8"/><circle cx="1300.7" cy="400.7" r="0.9" fill="#1a1a1a"/><path d="M1126 405 Q1168 438 1209 483.5 Q1211 486 1207 486 Q1170 458 1131 425 Q1120 416 1126 405 Z" stroke="#1a1a1a" stroke-width="1" fill="none"/><path d="M1129 412 Q1168 443 1206 482 M1132 418 Q1166 448 1204 483" stroke="#1a1a1a" stroke-width="0.6" fill="none"/><circle cx="1140" cy="421" r="1.1" fill="#1a1a1a"/><circle cx="1150" cy="430" r="1.1" fill="#1a1a1a"/><circle cx="1160" cy="439" r="1.1" fill="#1a1a1a"/><circle cx="1172" cy="452" r="1.1" fill="#1a1a1a"/><circle cx="1186" cy="466" r="1.1" fill="#1a1a1a"/><path d="M1165 410 L1171 422" stroke="#1a1a1a" stroke-width="0.9" fill="none"/><text x="1256" y="330" font-size="3" fill="#666" font-family="Liberation Sans">xxxxx</text><g transform="translate(0,0)"><path d="M1376 425 Q1380 470 1393 496 Q1398 503 1412 502 L1424 497 L1424 485 Q1405 470 1398 440 Z" stroke="#1a1a1a" stroke-width="0.9" fill="#fff"/><path d="M1384 428 L1400 475 M1388 480 L1412 472 M1390 486 L1414 478" stroke="#1a1a1a" stroke-width="0.9" fill="none"/><circle cx="1387" cy="437" r="1.8" stroke="#1a1a1a" stroke-width="0.9" fill="none"/><circle cx="1389" cy="451" r="1.8" stroke="#1a1a1a" stroke-width="0.9" fill="none"/><circle cx="1392" cy="465" r="1.8" stroke="#1a1a1a" stroke-width="0.9" fill="none"/><circle cx="1395" cy="479" r="1.8" stroke="#1a1a1a" stroke-width="0.9" fill="none"/><circle cx="1400" cy="490" r="1.5" fill="#1a1a1a"/><circle cx="1408" cy="492" r="1.3" stroke="#1a1a1a" stroke-width="0.9" fill="none"/><ellipse cx="1407.5" cy="393.7" rx="28.5" ry="90.5" transform="rotate(-8.7 1407.5 393.7)" stroke="#1a1a1a" stroke-width="1" fill="#fff"/><ellipse cx="1408.3" cy="393.7" rx="27" ry="89" transform="rotate(-8.7 1408.3 393.7)" stroke="#1a1a1a" stroke-width="0.6" fill="none"/><ellipse cx="1410.8" cy="394" rx="25" ry="87" transform="rotate(-8.7 1410.8 394)" stroke="#1a1a1a" stroke-width="1.1" fill="#fff"/><g transform="translate(1384.5 378) scale(0.3 1)"><text x="0" y="0" font-size="38" fill="#fff" stroke="#555" stroke-width="0.9" font-family="Liberation Sans" font-weight="bold" letter-spacing="-2">lleves</text></g><path d="M1391 386 v6 M1400 386 q2 3 0 6 M1404 467 v6 M1413 468 q2 3 0 6" stroke="#1a1a1a" stroke-width="1.2"/><path d="M1364 412 Q1378 392 1386 390" stroke="#1a1a1a" stroke-width="0.9" fill="none"/><rect x="1350.5" y="404" width="30.5" height="21" stroke="#1a1a1a" stroke-width="1" fill="#fff"/><path d="M1352 406 H1380 M1352 423 H1380 M1356 404 V425" stroke="#1a1a1a" stroke-width="0.7"/><path d="M1368 412 Q1368 420 1373 420 Q1378 420 1378 412 M1371 412 Q1371 417 1373 417 Q1376 417 1375 412" stroke="#1a1a1a" stroke-width="0.9" fill="none"/><path d="M1324 413 H1351 M1324 416 H1351" stroke="#1a1a1a" stroke-width="0.9" fill="none"/><path d="M1330 409 L1336 420 M1336 409 L1330 420 M1334 409 L1340 420 M1340 409 L1334 420" stroke="#1a1a1a" stroke-width="1.3"/><path d="M1381 405 L1386 400 M1383 414 l4 -3" stroke="#1a1a1a" stroke-width="1.2"/><path d="M1417 484 L1506 454 L1510 464 L1421 497 Z" stroke="#1a1a1a" stroke-width="0.9" fill="#fff"/><path d="M1424 487 L1503 460 L1504 463 L1425 490 Z" stroke="#1a1a1a" stroke-width="0.9" fill="none"/><path d="M1420 492 L1436 486" stroke="#1a1a1a" stroke-width="2"/><path d="M1503 446 L1511 443 L1514 458 L1506 461 Z" stroke="#1a1a1a" stroke-width="1" fill="#fff"/><path d="M1505 448 L1510 459" stroke="#1a1a1a" stroke-width="1.3"/><rect x="1497" y="441" width="4" height="6" stroke="#1a1a1a" stroke-width="0.9" fill="none" fill="#fff"/><path d="M1471.6 430.9 H1484.8 L1499 440.5" stroke="#1a1a1a" stroke-width="0.7" fill="none"/><text x="1471" y="430" font-size="2.5" fill="#555" font-family="Liberation Sans">xxxx xx</text><text x="1454" y="314" font-size="2.5" fill="#555" font-family="Liberation Sans">xxxx xx</text></g><g transform="translate(200,0)"><path d="M1376 425 Q1380 470 1393 496 Q1398 503 1412 502 L1424 497 L1424 485 Q1405 470 1398 440 Z" stroke="#1a1a1a" stroke-width="0.9" fill="#fff"/><path d="M1384 428 L1400 475 M1388 480 L1412 472 M1390 486 L1414 478" stroke="#1a1a1a" stroke-width="0.9" fill="none"/><circle cx="1387" cy="437" r="1.8" stroke="#1a1a1a" stroke-width="0.9" fill="none"/><circle cx="1389" cy="451" r="1.8" stroke="#1a1a1a" stroke-width="0.9" fill="none"/><circle cx="1392" cy="465" r="1.8" stroke="#1a1a1a" stroke-width="0.9" fill="none"/><circle cx="1395" cy="479" r="1.8" stroke="#1a1a1a" stroke-width="0.9" fill="none"/><circle cx="1400" cy="490" r="1.5" fill="#1a1a1a"/><circle cx="1408" cy="492" r="1.3" stroke="#1a1a1a" stroke-width="0.9" fill="none"/><ellipse cx="1407.5" cy="393.7" rx="28.5" ry="90.5" transform="rotate(-8.7 1407.5 393.7)" stroke="#1a1a1a" stroke-width="1" fill="#fff"/><ellipse cx="1408.3" cy="393.7" rx="27" ry="89" transform="rotate(-8.7 1408.3 393.7)" stroke="#1a1a1a" stroke-width="0.6" fill="none"/><ellipse cx="1410.8" cy="394" rx="25" ry="87" transform="rotate(-8.7 1410.8 394)" stroke="#1a1a1a" stroke-width="1.1" fill="#fff"/><g transform="translate(1384.5 378) scale(0.3 1)"><text x="0" y="0" font-size="38" fill="#fff" stroke="#555" stroke-width="0.9" font-family="Liberation Sans" font-weight="bold" letter-spacing="-2">lleves</text></g><path d="M1391 386 v6 M1400 386 q2 3 0 6 M1404 467 v6 M1413 468 q2 3 0 6" stroke="#1a1a1a" stroke-width="1.2"/><path d="M1364 412 Q1378 392 1386 390" stroke="#1a1a1a" stroke-width="0.9" fill="none"/><rect x="1350.5" y="404" width="30.5" height="21" stroke="#1a1a1a" stroke-width="1" fill="#fff"/><path d="M1352 406 H1380 M1352 423 H1380 M1356 404 V425" stroke="#1a1a1a" stroke-width="0.7"/><path d="M1368 412 Q1368 420 1373 420 Q1378 420 1378 412 M1371 412 Q1371 417 1373 417 Q1376 417 1375 412" stroke="#1a1a1a" stroke-width="0.9" fill="none"/><path d="M1324 413 H1351 M1324 416 H1351" stroke="#1a1a1a" stroke-width="0.9" fill="none"/><path d="M1330 409 L1336 420 M1336 409 L1330 420 M1334 409 L1340 420 M1340 409 L1334 420" stroke="#1a1a1a" stroke-width="1.3"/><path d="M1381 405 L1386 400 M1383 414 l4 -3" stroke="#1a1a1a" stroke-width="1.2"/><path d="M1417 484 L1506 454 L1510 464 L1421 497 Z" stroke="#1a1a1a" stroke-width="0.9" fill="#fff"/><path d="M1424 487 L1503 460 L1504 463 L1425 490 Z" stroke="#1a1a1a" stroke-width="0.9" fill="none"/><path d="M1420 492 L1436 486" stroke="#1a1a1a" stroke-width="2"/><path d="M1503 446 L1511 443 L1514 458 L1506 461 Z" stroke="#1a1a1a" stroke-width="1" fill="#fff"/><path d="M1505 448 L1510 459" stroke="#1a1a1a" stroke-width="1.3"/><rect x="1497" y="441" width="4" height="6" stroke="#1a1a1a" stroke-width="0.9" fill="none" fill="#fff"/><path d="M1471.6 430.9 H1484.8 L1499 440.5" stroke="#1a1a1a" stroke-width="0.7" fill="none"/><text x="1471" y="430" font-size="2.5" fill="#555" font-family="Liberation Sans">xxxx xx</text><text x="1454" y="314" font-size="2.5" fill="#555" font-family="Liberation Sans">xxxx xx</text></g><rect x="1118.5" y="607" width="8" height="96" stroke="#1a1a1a" stroke-width="1.2" fill="#fff"/><rect x="1125.5" y="605" width="261" height="99.5" stroke="#1a1a1a" stroke-width="1.1" fill="#fff"/><path d="M1125.5 607.3 H1386.5 M1125.5 702 H1386.5" stroke="#1a1a1a" stroke-width="0.8"/><rect x="1126" y="608" width="26.5" height="94" stroke="#1a1a1a" stroke-width="1" fill="#fff"/><path d="M1126 617.5 H1152.5 M1126 680 H1152.5 M1126 688.5 H1152.5" stroke="#1a1a1a" stroke-width="0.8"/><path d="M1127 681.5 H1152" stroke="#1a1a1a" stroke-width="0.7" stroke-dasharray="1.5 0.7"/><path d="M1127 683.1 H1152" stroke="#1a1a1a" stroke-width="0.7" stroke-dasharray="1.5 0.7"/><path d="M1127 684.7 H1152" stroke="#1a1a1a" stroke-width="0.7" stroke-dasharray="1.5 0.7"/><path d="M1127 686.3 H1152" stroke="#1a1a1a" stroke-width="0.7" stroke-dasharray="1.5 0.7"/><path d="M1127 687.9 H1152" stroke="#1a1a1a" stroke-width="0.7" stroke-dasharray="1.5 0.7"/><text x="1134" y="615.5" font-size="6" font-weight="bold" fill="#1a1a1a" font-family="Liberation Sans">T0</text><g transform="translate(1144,676) rotate(-90)"><text x="0" y="0" font-size="11" fill="none" stroke="#1a1a1a" stroke-width="0.55" font-family="Liberation Sans" font-weight="bold" transform="scale(1.05 1)">Televes</text></g><rect x="1137" y="624" width="4" height="3" fill="#1a1a1a"/><rect x="1132" y="672" width="5" height="6" rx="1" stroke="#1a1a1a" stroke-width="0.8" fill="none"/><path d="M1133 693 h12 M1133 695.5 h12 M1136 698.5 h6" stroke="#1a1a1a" stroke-width="1"/><rect x="1155.3" y="610" width="13.5" height="88.6" stroke="#1a1a1a" stroke-width="0.9" fill="#fff"/><rect x="1156.8" y="617" width="10.5" height="74" stroke="#1a1a1a" stroke-width="0.6" fill="none"/><path d="M1155.3 617 H1168.8" stroke="#1a1a1a" stroke-width="0.7"/><path d="M1162.1 605V610 M1162.1 698.6V704" stroke="#1a1a1a" stroke-width="0.6"/><text x="1157.9" y="615.6" font-size="5.2" font-weight="bold" fill="#5a1818" font-family="Liberation Sans" letter-spacing="-0.3">T03</text><circle cx="1162.4" cy="620.3" r="2.1" stroke="#1a1a1a" stroke-width="0.9" fill="#fff"/><circle cx="1162.4" cy="620.3" r="0.9" fill="#1a1a1a"/><circle cx="1162.4" cy="630.5" r="2.1" stroke="#1a1a1a" stroke-width="0.9" fill="#fff"/><circle cx="1162.4" cy="630.5" r="0.9" fill="#1a1a1a"/><circle cx="1162.4" cy="677.5" r="2.1" stroke="#1a1a1a" stroke-width="0.9" fill="#fff"/><circle cx="1162.4" cy="677.5" r="0.9" fill="#1a1a1a"/><circle cx="1162.4" cy="690" r="2.1" stroke="#1a1a1a" stroke-width="0.9" fill="#fff"/><circle cx="1162.4" cy="690" r="0.9" fill="#1a1a1a"/><path d="M1157.1 621h2 M1166.1 620.5h2 M1157.1 625.5h3M1157.1 631h2 M1166.6 631h1.5" stroke="#5a1818" stroke-width="1.1"/><path d="M1157.1 654.5h4 M1157.1 656.5h4 M1163.1 653v5 M1165.1 653v5" stroke="#5a1818" stroke-width="1.1"/><rect x="1156.9" y="659.5" width="5.5" height="3.2" fill="#5a1818"/><circle cx="1164.6" cy="661.5" r="0.8" fill="#5a1818"/><path d="M1160.6 666.5 l4 -2 l1 3 l-4 1.5z M1161.1 670 l4 -1 l0.5 3 l-4 1z" stroke="#5a1818" stroke-width="0.9" fill="#5a1818"/><path d="M1157.1 675.5 h3 M1165.6 682h2.5 M1157.1 683 h4 M1157.1 686h3 M1165.6 687h2" stroke="#5a1818" stroke-width="1.1"/><rect x="1157.6" y="693.5" width="9" height="2.5" fill="#5a1818" opacity="0.9"/><rect x="1173.2" y="610" width="13.5" height="88.6" stroke="#1a1a1a" stroke-width="0.9" fill="#fff"/><rect x="1174.8" y="617" width="10.5" height="74" stroke="#1a1a1a" stroke-width="0.6" fill="none"/><path d="M1173.2 617 H1186.8" stroke="#1a1a1a" stroke-width="0.7"/><path d="M1180.0 605V610 M1180.0 698.6V704" stroke="#1a1a1a" stroke-width="0.6"/><text x="1175.8" y="615.6" font-size="5.2" font-weight="bold" fill="#5a1818" font-family="Liberation Sans" letter-spacing="-0.3">T03</text><circle cx="1180.3" cy="620.3" r="2.1" stroke="#1a1a1a" stroke-width="0.9" fill="#fff"/><circle cx="1180.3" cy="620.3" r="0.9" fill="#1a1a1a"/><circle cx="1180.3" cy="630.5" r="2.1" stroke="#1a1a1a" stroke-width="0.9" fill="#fff"/><circle cx="1180.3" cy="630.5" r="0.9" fill="#1a1a1a"/><circle cx="1180.3" cy="677.5" r="2.1" stroke="#1a1a1a" stroke-width="0.9" fill="#fff"/><circle cx="1180.3" cy="677.5" r="0.9" fill="#1a1a1a"/><circle cx="1180.3" cy="690" r="2.1" stroke="#1a1a1a" stroke-width="0.9" fill="#fff"/><circle cx="1180.3" cy="690" r="0.9" fill="#1a1a1a"/><path d="M1175.0 621h2 M1184.0 620.5h2 M1175.0 625.5h3M1175.0 631h2 M1184.5 631h1.5" stroke="#5a1818" stroke-width="1.1"/><path d="M1175.0 654.5h4 M1175.0 656.5h4 M1181.0 653v5 M1183.0 653v5" stroke="#5a1818" stroke-width="1.1"/><rect x="1174.8" y="659.5" width="5.5" height="3.2" fill="#5a1818"/><circle cx="1182.5" cy="661.5" r="0.8" fill="#5a1818"/><path d="M1178.5 666.5 l4 -2 l1 3 l-4 1.5z M1179.0 670 l4 -1 l0.5 3 l-4 1z" stroke="#5a1818" stroke-width="0.9" fill="#5a1818"/><path d="M1175.0 675.5 h3 M1183.5 682h2.5 M1175.0 683 h4 M1175.0 686h3 M1183.5 687h2" stroke="#5a1818" stroke-width="1.1"/><rect x="1175.5" y="693.5" width="9" height="2.5" fill="#5a1818" opacity="0.9"/><rect x="1191.2" y="610" width="13.5" height="88.6" stroke="#1a1a1a" stroke-width="0.9" fill="#fff"/><rect x="1192.7" y="617" width="10.5" height="74" stroke="#1a1a1a" stroke-width="0.6" fill="none"/><path d="M1191.2 617 H1204.8" stroke="#1a1a1a" stroke-width="0.7"/><path d="M1198.0 605V610 M1198.0 698.6V704" stroke="#1a1a1a" stroke-width="0.6"/><text x="1193.8" y="615.6" font-size="5.2" font-weight="bold" fill="#5a1818" font-family="Liberation Sans" letter-spacing="-0.3">T03</text><circle cx="1198.3" cy="620.3" r="2.1" stroke="#1a1a1a" stroke-width="0.9" fill="#fff"/><circle cx="1198.3" cy="620.3" r="0.9" fill="#1a1a1a"/><circle cx="1198.3" cy="630.5" r="2.1" stroke="#1a1a1a" stroke-width="0.9" fill="#fff"/><circle cx="1198.3" cy="630.5" r="0.9" fill="#1a1a1a"/><circle cx="1198.3" cy="677.5" r="2.1" stroke="#1a1a1a" stroke-width="0.9" fill="#fff"/><circle cx="1198.3" cy="677.5" r="0.9" fill="#1a1a1a"/><circle cx="1198.3" cy="690" r="2.1" stroke="#1a1a1a" stroke-width="0.9" fill="#fff"/><circle cx="1198.3" cy="690" r="0.9" fill="#1a1a1a"/><path d="M1193.0 621h2 M1202.0 620.5h2 M1193.0 625.5h3M1193.0 631h2 M1202.5 631h1.5" stroke="#5a1818" stroke-width="1.1"/><path d="M1193.0 654.5h4 M1193.0 656.5h4 M1199.0 653v5 M1201.0 653v5" stroke="#5a1818" stroke-width="1.1"/><rect x="1192.8" y="659.5" width="5.5" height="3.2" fill="#5a1818"/><circle cx="1200.5" cy="661.5" r="0.8" fill="#5a1818"/><path d="M1196.5 666.5 l4 -2 l1 3 l-4 1.5z M1197.0 670 l4 -1 l0.5 3 l-4 1z" stroke="#5a1818" stroke-width="0.9" fill="#5a1818"/><path d="M1193.0 675.5 h3 M1201.5 682h2.5 M1193.0 683 h4 M1193.0 686h3 M1201.5 687h2" stroke="#5a1818" stroke-width="1.1"/><rect x="1193.5" y="693.5" width="9" height="2.5" fill="#5a1818" opacity="0.9"/><rect x="1209.1" y="610" width="13.5" height="88.6" stroke="#1a1a1a" stroke-width="0.9" fill="#fff"/><rect x="1210.6" y="617" width="10.5" height="74" stroke="#1a1a1a" stroke-width="0.6" fill="none"/><path d="M1209.1 617 H1222.7" stroke="#1a1a1a" stroke-width="0.7"/><path d="M1215.9 605V610 M1215.9 698.6V704" stroke="#1a1a1a" stroke-width="0.6"/><text x="1211.7" y="615.6" font-size="5.2" font-weight="bold" fill="#5a1818" font-family="Liberation Sans" letter-spacing="-0.3">T03</text><circle cx="1216.2" cy="620.3" r="2.1" stroke="#1a1a1a" stroke-width="0.9" fill="#fff"/><circle cx="1216.2" cy="620.3" r="0.9" fill="#1a1a1a"/><circle cx="1216.2" cy="630.5" r="2.1" stroke="#1a1a1a" stroke-width="0.9" fill="#fff"/><circle cx="1216.2" cy="630.5" r="0.9" fill="#1a1a1a"/><circle cx="1216.2" cy="677.5" r="2.1" stroke="#1a1a1a" stroke-width="0.9" fill="#fff"/><circle cx="1216.2" cy="677.5" r="0.9" fill="#1a1a1a"/><circle cx="1216.2" cy="690" r="2.1" stroke="#1a1a1a" stroke-width="0.9" fill="#fff"/><circle cx="1216.2" cy="690" r="0.9" fill="#1a1a1a"/><path d="M1210.9 621h2 M1219.9 620.5h2 M1210.9 625.5h3M1210.9 631h2 M1220.4 631h1.5" stroke="#5a1818" stroke-width="1.1"/><path d="M1210.9 654.5h4 M1210.9 656.5h4 M1216.9 653v5 M1218.9 653v5" stroke="#5a1818" stroke-width="1.1"/><rect x="1210.7" y="659.5" width="5.5" height="3.2" fill="#5a1818"/><circle cx="1218.4" cy="661.5" r="0.8" fill="#5a1818"/><path d="M1214.4 666.5 l4 -2 l1 3 l-4 1.5z M1214.9 670 l4 -1 l0.5 3 l-4 1z" stroke="#5a1818" stroke-width="0.9" fill="#5a1818"/><path d="M1210.9 675.5 h3 M1219.4 682h2.5 M1210.9 683 h4 M1210.9 686h3 M1219.4 687h2" stroke="#5a1818" stroke-width="1.1"/><rect x="1211.4" y="693.5" width="9" height="2.5" fill="#5a1818" opacity="0.9"/><rect x="1227.1" y="610" width="13.5" height="88.6" stroke="#1a1a1a" stroke-width="0.9" fill="#fff"/><rect x="1228.6" y="617" width="10.5" height="74" stroke="#1a1a1a" stroke-width="0.6" fill="none"/><path d="M1227.1 617 H1240.6" stroke="#1a1a1a" stroke-width="0.7"/><path d="M1233.9 605V610 M1233.9 698.6V704" stroke="#1a1a1a" stroke-width="0.6"/><text x="1229.7" y="615.6" font-size="5.2" font-weight="bold" fill="#5a1818" font-family="Liberation Sans" letter-spacing="-0.3">T03</text><circle cx="1234.2" cy="620.3" r="2.1" stroke="#1a1a1a" stroke-width="0.9" fill="#fff"/><circle cx="1234.2" cy="620.3" r="0.9" fill="#1a1a1a"/><circle cx="1234.2" cy="630.5" r="2.1" stroke="#1a1a1a" stroke-width="0.9" fill="#fff"/><circle cx="1234.2" cy="630.5" r="0.9" fill="#1a1a1a"/><circle cx="1234.2" cy="677.5" r="2.1" stroke="#1a1a1a" stroke-width="0.9" fill="#fff"/><circle cx="1234.2" cy="677.5" r="0.9" fill="#1a1a1a"/><circle cx="1234.2" cy="690" r="2.1" stroke="#1a1a1a" stroke-width="0.9" fill="#fff"/><circle cx="1234.2" cy="690" r="0.9" fill="#1a1a1a"/><path d="M1228.9 621h2 M1237.9 620.5h2 M1228.9 625.5h3M1228.9 631h2 M1238.4 631h1.5" stroke="#5a1818" stroke-width="1.1"/><path d="M1228.9 654.5h4 M1228.9 656.5h4 M1234.9 653v5 M1236.9 653v5" stroke="#5a1818" stroke-width="1.1"/><rect x="1228.7" y="659.5" width="5.5" height="3.2" fill="#5a1818"/><circle cx="1236.4" cy="661.5" r="0.8" fill="#5a1818"/><path d="M1232.4 666.5 l4 -2 l1 3 l-4 1.5z M1232.9 670 l4 -1 l0.5 3 l-4 1z" stroke="#5a1818" stroke-width="0.9" fill="#5a1818"/><path d="M1228.9 675.5 h3 M1237.4 682h2.5 M1228.9 683 h4 M1228.9 686h3 M1237.4 687h2" stroke="#5a1818" stroke-width="1.1"/><rect x="1229.4" y="693.5" width="9" height="2.5" fill="#5a1818" opacity="0.9"/><rect x="1245.0" y="610" width="13.5" height="88.6" stroke="#1a1a1a" stroke-width="0.9" fill="#fff"/><rect x="1246.5" y="617" width="10.5" height="74" stroke="#1a1a1a" stroke-width="0.6" fill="none"/><path d="M1245.0 617 H1258.6" stroke="#1a1a1a" stroke-width="0.7"/><path d="M1251.8 605V610 M1251.8 698.6V704" stroke="#1a1a1a" stroke-width="0.6"/><text x="1247.6" y="615.6" font-size="5.2" font-weight="bold" fill="#5a1818" font-family="Liberation Sans" letter-spacing="-0.3">T03</text><circle cx="1252.1" cy="620.3" r="2.1" stroke="#1a1a1a" stroke-width="0.9" fill="#fff"/><circle cx="1252.1" cy="620.3" r="0.9" fill="#1a1a1a"/><circle cx="1252.1" cy="630.5" r="2.1" stroke="#1a1a1a" stroke-width="0.9" fill="#fff"/><circle cx="1252.1" cy="630.5" r="0.9" fill="#1a1a1a"/><circle cx="1252.1" cy="677.5" r="2.1" stroke="#1a1a1a" stroke-width="0.9" fill="#fff"/><circle cx="1252.1" cy="677.5" r="0.9" fill="#1a1a1a"/><circle cx="1252.1" cy="690" r="2.1" stroke="#1a1a1a" stroke-width="0.9" fill="#fff"/><circle cx="1252.1" cy="690" r="0.9" fill="#1a1a1a"/><path d="M1246.8 621h2 M1255.8 620.5h2 M1246.8 625.5h3M1246.8 631h2 M1256.3 631h1.5" stroke="#5a1818" stroke-width="1.1"/><path d="M1246.8 654.5h4 M1246.8 656.5h4 M1252.8 653v5 M1254.8 653v5" stroke="#5a1818" stroke-width="1.1"/><rect x="1246.6" y="659.5" width="5.5" height="3.2" fill="#5a1818"/><circle cx="1254.3" cy="661.5" r="0.8" fill="#5a1818"/><path d="M1250.3 666.5 l4 -2 l1 3 l-4 1.5z M1250.8 670 l4 -1 l0.5 3 l-4 1z" stroke="#5a1818" stroke-width="0.9" fill="#5a1818"/><path d="M1246.8 675.5 h3 M1255.3 682h2.5 M1246.8 683 h4 M1246.8 686h3 M1255.3 687h2" stroke="#5a1818" stroke-width="1.1"/><rect x="1247.3" y="693.5" width="9" height="2.5" fill="#5a1818" opacity="0.9"/><rect x="1263.0" y="610" width="13.5" height="88.6" stroke="#1a1a1a" stroke-width="0.9" fill="#fff"/><rect x="1264.5" y="617" width="10.5" height="74" stroke="#1a1a1a" stroke-width="0.6" fill="none"/><path d="M1263.0 617 H1276.5" stroke="#1a1a1a" stroke-width="0.7"/><path d="M1269.8 605V610 M1269.8 698.6V704" stroke="#1a1a1a" stroke-width="0.6"/><text x="1265.6" y="615.6" font-size="5.2" font-weight="bold" fill="#5a1818" font-family="Liberation Sans" letter-spacing="-0.3">T03</text><circle cx="1270.1" cy="620.3" r="2.1" stroke="#1a1a1a" stroke-width="0.9" fill="#fff"/><circle cx="1270.1" cy="620.3" r="0.9" fill="#1a1a1a"/><circle cx="1270.1" cy="630.5" r="2.1" stroke="#1a1a1a" stroke-width="0.9" fill="#fff"/><circle cx="1270.1" cy="630.5" r="0.9" fill="#1a1a1a"/><circle cx="1270.1" cy="677.5" r="2.1" stroke="#1a1a1a" stroke-width="0.9" fill="#fff"/><circle cx="1270.1" cy="677.5" r="0.9" fill="#1a1a1a"/><circle cx="1270.1" cy="690" r="2.1" stroke="#1a1a1a" stroke-width="0.9" fill="#fff"/><circle cx="1270.1" cy="690" r="0.9" fill="#1a1a1a"/><path d="M1264.8 621h2 M1273.8 620.5h2 M1264.8 625.5h3M1264.8 631h2 M1274.3 631h1.5" stroke="#5a1818" stroke-width="1.1"/><path d="M1264.8 654.5h4 M1264.8 656.5h4 M1270.8 653v5 M1272.8 653v5" stroke="#5a1818" stroke-width="1.1"/><rect x="1264.6" y="659.5" width="5.5" height="3.2" fill="#5a1818"/><circle cx="1272.3" cy="661.5" r="0.8" fill="#5a1818"/><path d="M1268.3 666.5 l4 -2 l1 3 l-4 1.5z M1268.8 670 l4 -1 l0.5 3 l-4 1z" stroke="#5a1818" stroke-width="0.9" fill="#5a1818"/><path d="M1264.8 675.5 h3 M1273.3 682h2.5 M1264.8 683 h4 M1264.8 686h3 M1273.3 687h2" stroke="#5a1818" stroke-width="1.1"/><rect x="1265.3" y="693.5" width="9" height="2.5" fill="#5a1818" opacity="0.9"/><rect x="1281.0" y="610" width="13.5" height="88.6" stroke="#1a1a1a" stroke-width="0.9" fill="#fff"/><rect x="1282.5" y="617" width="10.5" height="74" stroke="#1a1a1a" stroke-width="0.6" fill="none"/><path d="M1281.0 617 H1294.5" stroke="#1a1a1a" stroke-width="0.7"/><path d="M1287.8 605V610 M1287.8 698.6V704" stroke="#1a1a1a" stroke-width="0.6"/><text x="1283.5" y="615.6" font-size="5.2" font-weight="bold" fill="#5a1818" font-family="Liberation Sans" letter-spacing="-0.3">T03</text><circle cx="1288.0" cy="620.3" r="2.1" stroke="#1a1a1a" stroke-width="0.9" fill="#fff"/><circle cx="1288.0" cy="620.3" r="0.9" fill="#1a1a1a"/><circle cx="1288.0" cy="630.5" r="2.1" stroke="#1a1a1a" stroke-width="0.9" fill="#fff"/><circle cx="1288.0" cy="630.5" r="0.9" fill="#1a1a1a"/><circle cx="1288.0" cy="677.5" r="2.1" stroke="#1a1a1a" stroke-width="0.9" fill="#fff"/><circle cx="1288.0" cy="677.5" r="0.9" fill="#1a1a1a"/><circle cx="1288.0" cy="690" r="2.1" stroke="#1a1a1a" stroke-width="0.9" fill="#fff"/><circle cx="1288.0" cy="690" r="0.9" fill="#1a1a1a"/><path d="M1282.8 621h2 M1291.8 620.5h2 M1282.8 625.5h3M1282.8 631h2 M1292.2 631h1.5" stroke="#5a1818" stroke-width="1.1"/><path d="M1282.8 654.5h4 M1282.8 656.5h4 M1288.8 653v5 M1290.8 653v5" stroke="#5a1818" stroke-width="1.1"/><rect x="1282.5" y="659.5" width="5.5" height="3.2" fill="#5a1818"/><circle cx="1290.2" cy="661.5" r="0.8" fill="#5a1818"/><path d="M1286.2 666.5 l4 -2 l1 3 l-4 1.5z M1286.8 670 l4 -1 l0.5 3 l-4 1z" stroke="#5a1818" stroke-width="0.9" fill="#5a1818"/><path d="M1282.8 675.5 h3 M1291.2 682h2.5 M1282.8 683 h4 M1282.8 686h3 M1291.2 687h2" stroke="#5a1818" stroke-width="1.1"/><rect x="1283.2" y="693.5" width="9" height="2.5" fill="#5a1818" opacity="0.9"/><rect x="1298.9" y="610" width="13.5" height="88.6" stroke="#1a1a1a" stroke-width="0.9" fill="#fff"/><rect x="1300.4" y="617" width="10.5" height="74" stroke="#1a1a1a" stroke-width="0.6" fill="none"/><path d="M1298.9 617 H1312.4" stroke="#1a1a1a" stroke-width="0.7"/><path d="M1305.7 605V610 M1305.7 698.6V704" stroke="#1a1a1a" stroke-width="0.6"/><text x="1301.5" y="615.6" font-size="5.2" font-weight="bold" fill="#5a1818" font-family="Liberation Sans" letter-spacing="-0.3">T03</text><circle cx="1306.0" cy="620.3" r="2.1" stroke="#1a1a1a" stroke-width="0.9" fill="#fff"/><circle cx="1306.0" cy="620.3" r="0.9" fill="#1a1a1a"/><circle cx="1306.0" cy="630.5" r="2.1" stroke="#1a1a1a" stroke-width="0.9" fill="#fff"/><circle cx="1306.0" cy="630.5" r="0.9" fill="#1a1a1a"/><circle cx="1306.0" cy="677.5" r="2.1" stroke="#1a1a1a" stroke-width="0.9" fill="#fff"/><circle cx="1306.0" cy="677.5" r="0.9" fill="#1a1a1a"/><circle cx="1306.0" cy="690" r="2.1" stroke="#1a1a1a" stroke-width="0.9" fill="#fff"/><circle cx="1306.0" cy="690" r="0.9" fill="#1a1a1a"/><path d="M1300.7 621h2 M1309.7 620.5h2 M1300.7 625.5h3M1300.7 631h2 M1310.2 631h1.5" stroke="#5a1818" stroke-width="1.1"/><path d="M1300.7 654.5h4 M1300.7 656.5h4 M1306.7 653v5 M1308.7 653v5" stroke="#5a1818" stroke-width="1.1"/><rect x="1300.5" y="659.5" width="5.5" height="3.2" fill="#5a1818"/><circle cx="1308.2" cy="661.5" r="0.8" fill="#5a1818"/><path d="M1304.2 666.5 l4 -2 l1 3 l-4 1.5z M1304.7 670 l4 -1 l0.5 3 l-4 1z" stroke="#5a1818" stroke-width="0.9" fill="#5a1818"/><path d="M1300.7 675.5 h3 M1309.2 682h2.5 M1300.7 683 h4 M1300.7 686h3 M1309.2 687h2" stroke="#5a1818" stroke-width="1.1"/><rect x="1301.2" y="693.5" width="9" height="2.5" fill="#5a1818" opacity="0.9"/><rect x="1316.8" y="610" width="13.5" height="88.6" stroke="#1a1a1a" stroke-width="0.9" fill="#fff"/><rect x="1318.3" y="617" width="10.5" height="74" stroke="#1a1a1a" stroke-width="0.6" fill="none"/><path d="M1316.8 617 H1330.4" stroke="#1a1a1a" stroke-width="0.7"/><path d="M1323.6 605V610 M1323.6 698.6V704" stroke="#1a1a1a" stroke-width="0.6"/><text x="1319.4" y="615.6" font-size="5.2" font-weight="bold" fill="#5a1818" font-family="Liberation Sans" letter-spacing="-0.3">T03</text><circle cx="1323.9" cy="620.3" r="2.1" stroke="#1a1a1a" stroke-width="0.9" fill="#fff"/><circle cx="1323.9" cy="620.3" r="0.9" fill="#1a1a1a"/><circle cx="1323.9" cy="630.5" r="2.1" stroke="#1a1a1a" stroke-width="0.9" fill="#fff"/><circle cx="1323.9" cy="630.5" r="0.9" fill="#1a1a1a"/><circle cx="1323.9" cy="677.5" r="2.1" stroke="#1a1a1a" stroke-width="0.9" fill="#fff"/><circle cx="1323.9" cy="677.5" r="0.9" fill="#1a1a1a"/><circle cx="1323.9" cy="690" r="2.1" stroke="#1a1a1a" stroke-width="0.9" fill="#fff"/><circle cx="1323.9" cy="690" r="0.9" fill="#1a1a1a"/><path d="M1318.6 621h2 M1327.6 620.5h2 M1318.6 625.5h3M1318.6 631h2 M1328.1 631h1.5" stroke="#5a1818" stroke-width="1.1"/><path d="M1318.6 654.5h4 M1318.6 656.5h4 M1324.6 653v5 M1326.6 653v5" stroke="#5a1818" stroke-width="1.1"/><rect x="1318.4" y="659.5" width="5.5" height="3.2" fill="#5a1818"/><circle cx="1326.1" cy="661.5" r="0.8" fill="#5a1818"/><path d="M1322.1 666.5 l4 -2 l1 3 l-4 1.5z M1322.6 670 l4 -1 l0.5 3 l-4 1z" stroke="#5a1818" stroke-width="0.9" fill="#5a1818"/><path d="M1318.6 675.5 h3 M1327.1 682h2.5 M1318.6 683 h4 M1318.6 686h3 M1327.1 687h2" stroke="#5a1818" stroke-width="1.1"/><rect x="1319.1" y="693.5" width="9" height="2.5" fill="#5a1818" opacity="0.9"/><rect x="1334.8" y="610" width="13.5" height="88.6" stroke="#1a1a1a" stroke-width="0.9" fill="#fff"/><rect x="1336.3" y="617" width="10.5" height="74" stroke="#1a1a1a" stroke-width="0.6" fill="none"/><path d="M1334.8 617 H1348.3" stroke="#1a1a1a" stroke-width="0.7"/><path d="M1341.6 605V610 M1341.6 698.6V704" stroke="#1a1a1a" stroke-width="0.6"/><text x="1337.4" y="615.6" font-size="5.2" font-weight="bold" fill="#5a1818" font-family="Liberation Sans" letter-spacing="-0.3">T03</text><circle cx="1341.9" cy="620.3" r="2.1" stroke="#1a1a1a" stroke-width="0.9" fill="#fff"/><circle cx="1341.9" cy="620.3" r="0.9" fill="#1a1a1a"/><circle cx="1341.9" cy="630.5" r="2.1" stroke="#1a1a1a" stroke-width="0.9" fill="#fff"/><circle cx="1341.9" cy="630.5" r="0.9" fill="#1a1a1a"/><circle cx="1341.9" cy="677.5" r="2.1" stroke="#1a1a1a" stroke-width="0.9" fill="#fff"/><circle cx="1341.9" cy="677.5" r="0.9" fill="#1a1a1a"/><circle cx="1341.9" cy="690" r="2.1" stroke="#1a1a1a" stroke-width="0.9" fill="#fff"/><circle cx="1341.9" cy="690" r="0.9" fill="#1a1a1a"/><path d="M1336.6 621h2 M1345.6 620.5h2 M1336.6 625.5h3M1336.6 631h2 M1346.1 631h1.5" stroke="#5a1818" stroke-width="1.1"/><path d="M1336.6 654.5h4 M1336.6 656.5h4 M1342.6 653v5 M1344.6 653v5" stroke="#5a1818" stroke-width="1.1"/><rect x="1336.4" y="659.5" width="5.5" height="3.2" fill="#5a1818"/><circle cx="1344.1" cy="661.5" r="0.8" fill="#5a1818"/><path d="M1340.1 666.5 l4 -2 l1 3 l-4 1.5z M1340.6 670 l4 -1 l0.5 3 l-4 1z" stroke="#5a1818" stroke-width="0.9" fill="#5a1818"/><path d="M1336.6 675.5 h3 M1345.1 682h2.5 M1336.6 683 h4 M1336.6 686h3 M1345.1 687h2" stroke="#5a1818" stroke-width="1.1"/><rect x="1337.1" y="693.5" width="9" height="2.5" fill="#5a1818" opacity="0.9"/><rect x="1352.8" y="610" width="13.5" height="88.6" stroke="#1a1a1a" stroke-width="0.9" fill="#fff"/><rect x="1354.2" y="617" width="10.5" height="74" stroke="#1a1a1a" stroke-width="0.6" fill="none"/><path d="M1352.8 617 H1366.3" stroke="#1a1a1a" stroke-width="0.7"/><path d="M1359.5 605V610 M1359.5 698.6V704" stroke="#1a1a1a" stroke-width="0.6"/><text x="1355.3" y="615.6" font-size="5.2" font-weight="bold" fill="#5a1818" font-family="Liberation Sans" letter-spacing="-0.3">T03</text><circle cx="1359.8" cy="620.3" r="2.1" stroke="#1a1a1a" stroke-width="0.9" fill="#fff"/><circle cx="1359.8" cy="620.3" r="0.9" fill="#1a1a1a"/><circle cx="1359.8" cy="630.5" r="2.1" stroke="#1a1a1a" stroke-width="0.9" fill="#fff"/><circle cx="1359.8" cy="630.5" r="0.9" fill="#1a1a1a"/><circle cx="1359.8" cy="677.5" r="2.1" stroke="#1a1a1a" stroke-width="0.9" fill="#fff"/><circle cx="1359.8" cy="677.5" r="0.9" fill="#1a1a1a"/><circle cx="1359.8" cy="690" r="2.1" stroke="#1a1a1a" stroke-width="0.9" fill="#fff"/><circle cx="1359.8" cy="690" r="0.9" fill="#1a1a1a"/><path d="M1354.5 621h2 M1363.5 620.5h2 M1354.5 625.5h3M1354.5 631h2 M1364.0 631h1.5" stroke="#5a1818" stroke-width="1.1"/><path d="M1354.5 654.5h4 M1354.5 656.5h4 M1360.5 653v5 M1362.5 653v5" stroke="#5a1818" stroke-width="1.1"/><rect x="1354.3" y="659.5" width="5.5" height="3.2" fill="#5a1818"/><circle cx="1362.0" cy="661.5" r="0.8" fill="#5a1818"/><path d="M1358.0 666.5 l4 -2 l1 3 l-4 1.5z M1358.5 670 l4 -1 l0.5 3 l-4 1z" stroke="#5a1818" stroke-width="0.9" fill="#5a1818"/><path d="M1354.5 675.5 h3 M1363.0 682h2.5 M1354.5 683 h4 M1354.5 686h3 M1363.0 687h2" stroke="#5a1818" stroke-width="1.1"/><rect x="1355.0" y="693.5" width="9" height="2.5" fill="#5a1818" opacity="0.9"/><rect x="1370.7" y="610" width="13.5" height="88.6" stroke="#1a1a1a" stroke-width="0.9" fill="#fff"/><rect x="1372.2" y="617" width="10.5" height="74" stroke="#1a1a1a" stroke-width="0.6" fill="none"/><path d="M1370.7 617 H1384.2" stroke="#1a1a1a" stroke-width="0.7"/><path d="M1377.5 605V610 M1377.5 698.6V704" stroke="#1a1a1a" stroke-width="0.6"/><text x="1373.3" y="615.6" font-size="5.2" font-weight="bold" fill="#5a1818" font-family="Liberation Sans" letter-spacing="-0.3">T03</text><circle cx="1377.8" cy="620.3" r="2.1" stroke="#1a1a1a" stroke-width="0.9" fill="#fff"/><circle cx="1377.8" cy="620.3" r="0.9" fill="#1a1a1a"/><circle cx="1377.8" cy="630.5" r="2.1" stroke="#1a1a1a" stroke-width="0.9" fill="#fff"/><circle cx="1377.8" cy="630.5" r="0.9" fill="#1a1a1a"/><circle cx="1377.8" cy="677.5" r="2.1" stroke="#1a1a1a" stroke-width="0.9" fill="#fff"/><circle cx="1377.8" cy="677.5" r="0.9" fill="#1a1a1a"/><circle cx="1377.8" cy="690" r="2.1" stroke="#1a1a1a" stroke-width="0.9" fill="#fff"/><circle cx="1377.8" cy="690" r="0.9" fill="#1a1a1a"/><path d="M1372.5 621h2 M1381.5 620.5h2 M1372.5 625.5h3M1372.5 631h2 M1382.0 631h1.5" stroke="#5a1818" stroke-width="1.1"/><path d="M1372.5 654.5h4 M1372.5 656.5h4 M1378.5 653v5 M1380.5 653v5" stroke="#5a1818" stroke-width="1.1"/><rect x="1372.3" y="659.5" width="5.5" height="3.2" fill="#5a1818"/><circle cx="1380.0" cy="661.5" r="0.8" fill="#5a1818"/><path d="M1376.0 666.5 l4 -2 l1 3 l-4 1.5z M1376.5 670 l4 -1 l0.5 3 l-4 1z" stroke="#5a1818" stroke-width="0.9" fill="#5a1818"/><path d="M1372.5 675.5 h3 M1381.0 682h2.5 M1372.5 683 h4 M1372.5 686h3 M1381.0 687h2" stroke="#5a1818" stroke-width="1.1"/><rect x="1373.0" y="693.5" width="9" height="2.5" fill="#5a1818" opacity="0.9"/><path d="M1178.0 632 L1198.0 619.5" stroke="#1a1a1a" stroke-width="4" stroke-linecap="round"/><path d="M1178.0 632 L1198.0 619.5" stroke="#fff" stroke-width="2.3" stroke-linecap="round"/><path d="M1180.0 630.5 L1196.0 620.5" stroke="#1a1a1a" stroke-width="0.5" stroke-dasharray="2 1.5"/><path d="M1196.0 632 L1216.0 619.5" stroke="#1a1a1a" stroke-width="4" stroke-linecap="round"/><path d="M1196.0 632 L1216.0 619.5" stroke="#fff" stroke-width="2.3" stroke-linecap="round"/><path d="M1198.0 630.5 L1214.0 620.5" stroke="#1a1a1a" stroke-width="0.5" stroke-dasharray="2 1.5"/><path d="M1213.9 632 L1233.9 619.5" stroke="#1a1a1a" stroke-width="4" stroke-linecap="round"/><path d="M1213.9 632 L1233.9 619.5" stroke="#fff" stroke-width="2.3" stroke-linecap="round"/><path d="M1215.9 630.5 L1231.9 620.5" stroke="#1a1a1a" stroke-width="0.5" stroke-dasharray="2 1.5"/><path d="M1231.9 632 L1251.9 619.5" stroke="#1a1a1a" stroke-width="4" stroke-linecap="round"/><path d="M1231.9 632 L1251.9 619.5" stroke="#fff" stroke-width="2.3" stroke-linecap="round"/><path d="M1233.9 630.5 L1249.9 620.5" stroke="#1a1a1a" stroke-width="0.5" stroke-dasharray="2 1.5"/><path d="M1249.8 632 L1269.8 619.5" stroke="#1a1a1a" stroke-width="4" stroke-linecap="round"/><path d="M1249.8 632 L1269.8 619.5" stroke="#fff" stroke-width="2.3" stroke-linecap="round"/><path d="M1251.8 630.5 L1267.8 620.5" stroke="#1a1a1a" stroke-width="0.5" stroke-dasharray="2 1.5"/><path d="M1267.8 632 L1287.8 619.5" stroke="#1a1a1a" stroke-width="4" stroke-linecap="round"/><path d="M1267.8 632 L1287.8 619.5" stroke="#fff" stroke-width="2.3" stroke-linecap="round"/><path d="M1269.8 630.5 L1285.8 620.5" stroke="#1a1a1a" stroke-width="0.5" stroke-dasharray="2 1.5"/><path d="M1285.8 632 L1305.8 619.5" stroke="#1a1a1a" stroke-width="4" stroke-linecap="round"/><path d="M1285.8 632 L1305.8 619.5" stroke="#fff" stroke-width="2.3" stroke-linecap="round"/><path d="M1287.8 630.5 L1303.8 620.5" stroke="#1a1a1a" stroke-width="0.5" stroke-dasharray="2 1.5"/><path d="M1303.7 632 L1323.7 619.5" stroke="#1a1a1a" stroke-width="4" stroke-linecap="round"/><path d="M1303.7 632 L1323.7 619.5" stroke="#fff" stroke-width="2.3" stroke-linecap="round"/><path d="M1305.7 630.5 L1321.7 620.5" stroke="#1a1a1a" stroke-width="0.5" stroke-dasharray="2 1.5"/><path d="M1321.6 632 L1341.6 619.5" stroke="#1a1a1a" stroke-width="4" stroke-linecap="round"/><path d="M1321.6 632 L1341.6 619.5" stroke="#fff" stroke-width="2.3" stroke-linecap="round"/><path d="M1323.6 630.5 L1339.6 620.5" stroke="#1a1a1a" stroke-width="0.5" stroke-dasharray="2 1.5"/><path d="M1161.1 690.5 L1181.1 677.8" stroke="#1a1a1a" stroke-width="4" stroke-linecap="round"/><path d="M1161.1 690.5 L1181.1 677.8" stroke="#fff" stroke-width="2.3" stroke-linecap="round"/><path d="M1163.1 689 L1179.1 679" stroke="#1a1a1a" stroke-width="0.5" stroke-dasharray="2 1.5"/><path d="M1179.0 690.5 L1199.0 677.8" stroke="#1a1a1a" stroke-width="4" stroke-linecap="round"/><path d="M1179.0 690.5 L1199.0 677.8" stroke="#fff" stroke-width="2.3" stroke-linecap="round"/><path d="M1181.0 689 L1197.0 679" stroke="#1a1a1a" stroke-width="0.5" stroke-dasharray="2 1.5"/><path d="M1197.0 690.5 L1217.0 677.8" stroke="#1a1a1a" stroke-width="4" stroke-linecap="round"/><path d="M1197.0 690.5 L1217.0 677.8" stroke="#fff" stroke-width="2.3" stroke-linecap="round"/><path d="M1199.0 689 L1215.0 679" stroke="#1a1a1a" stroke-width="0.5" stroke-dasharray="2 1.5"/><path d="M1214.9 690.5 L1234.9 677.8" stroke="#1a1a1a" stroke-width="4" stroke-linecap="round"/><path d="M1214.9 690.5 L1234.9 677.8" stroke="#fff" stroke-width="2.3" stroke-linecap="round"/><path d="M1216.9 689 L1232.9 679" stroke="#1a1a1a" stroke-width="0.5" stroke-dasharray="2 1.5"/><path d="M1232.9 690.5 L1252.9 677.8" stroke="#1a1a1a" stroke-width="4" stroke-linecap="round"/><path d="M1232.9 690.5 L1252.9 677.8" stroke="#fff" stroke-width="2.3" stroke-linecap="round"/><path d="M1234.9 689 L1250.9 679" stroke="#1a1a1a" stroke-width="0.5" stroke-dasharray="2 1.5"/><path d="M1250.8 690.5 L1270.8 677.8" stroke="#1a1a1a" stroke-width="4" stroke-linecap="round"/><path d="M1250.8 690.5 L1270.8 677.8" stroke="#fff" stroke-width="2.3" stroke-linecap="round"/><path d="M1252.8 689 L1268.8 679" stroke="#1a1a1a" stroke-width="0.5" stroke-dasharray="2 1.5"/><path d="M1268.8 690.5 L1288.8 677.8" stroke="#1a1a1a" stroke-width="4" stroke-linecap="round"/><path d="M1268.8 690.5 L1288.8 677.8" stroke="#fff" stroke-width="2.3" stroke-linecap="round"/><path d="M1270.8 689 L1286.8 679" stroke="#1a1a1a" stroke-width="0.5" stroke-dasharray="2 1.5"/><path d="M1286.8 690.5 L1306.8 677.8" stroke="#1a1a1a" stroke-width="4" stroke-linecap="round"/><path d="M1286.8 690.5 L1306.8 677.8" stroke="#fff" stroke-width="2.3" stroke-linecap="round"/><path d="M1288.8 689 L1304.8 679" stroke="#1a1a1a" stroke-width="0.5" stroke-dasharray="2 1.5"/><path d="M1304.7 690.5 L1324.7 677.8" stroke="#1a1a1a" stroke-width="4" stroke-linecap="round"/><path d="M1304.7 690.5 L1324.7 677.8" stroke="#fff" stroke-width="2.3" stroke-linecap="round"/><path d="M1306.7 689 L1322.7 679" stroke="#1a1a1a" stroke-width="0.5" stroke-dasharray="2 1.5"/><path d="M1322.6 690.5 L1342.6 677.8" stroke="#1a1a1a" stroke-width="4" stroke-linecap="round"/><path d="M1322.6 690.5 L1342.6 677.8" stroke="#fff" stroke-width="2.3" stroke-linecap="round"/><path d="M1324.6 689 L1340.6 679" stroke="#1a1a1a" stroke-width="0.5" stroke-dasharray="2 1.5"/><path d="M1340.6 690.5 L1360.6 677.8" stroke="#1a1a1a" stroke-width="4" stroke-linecap="round"/><path d="M1340.6 690.5 L1360.6 677.8" stroke="#fff" stroke-width="2.3" stroke-linecap="round"/><path d="M1342.6 689 L1358.6 679" stroke="#1a1a1a" stroke-width="0.5" stroke-dasharray="2 1.5"/><path d="M1153.1 605V704" stroke="#1a1a1a" stroke-width="1.9"/><path d="M1171.0 605V704" stroke="#1a1a1a" stroke-width="1.9"/><path d="M1189.0 605V704" stroke="#1a1a1a" stroke-width="1.9"/><path d="M1206.9 605V704" stroke="#1a1a1a" stroke-width="1.9"/><path d="M1224.9 605V704" stroke="#1a1a1a" stroke-width="1.9"/><path d="M1242.8 605V704" stroke="#1a1a1a" stroke-width="1.9"/><path d="M1260.8 605V704" stroke="#1a1a1a" stroke-width="1.9"/><path d="M1278.8 605V704" stroke="#1a1a1a" stroke-width="1.9"/><path d="M1296.7 605V704" stroke="#1a1a1a" stroke-width="1.9"/><path d="M1314.6 605V704" stroke="#1a1a1a" stroke-width="1.9"/><path d="M1332.6 605V704" stroke="#1a1a1a" stroke-width="1.9"/><path d="M1350.5 605V704" stroke="#1a1a1a" stroke-width="1.9"/><path d="M1368.5 605V704" stroke="#1a1a1a" stroke-width="1.9"/><path d="M1386.4 605V704" stroke="#1a1a1a" stroke-width="1.9"/><rect x="1154" y="681" width="5" height="9" fill="#5a1818"/><path d="M1162.5 605V620.5 M1180.5 605V620.5 M1342.4 605V630.5 M1359.4 605V630.5 M1377.2 605V630.5 M1340.6 690V705 M1358.6 690V705 M1377.8 690V705" stroke="#d0141a" stroke-width="1.3" fill="none"/><rect x="930.5" y="724.5" width="354" height="21" stroke="#000" stroke-width="1.2" fill="none"/><path d="M955.5 724.5V745.5" stroke="#000" stroke-width="1.1"/><path d="M987 724.5V745.5" stroke="#000" stroke-width="1.1"/><path d="M1016.25 724.5V745.5" stroke="#000" stroke-width="1.1"/><path d="M1045.5 724.5V745.5" stroke="#000" stroke-width="1.1"/><path d="M1075 724.5V745.5" stroke="#000" stroke-width="1.1"/><path d="M1104.25 724.5V745.5" stroke="#000" stroke-width="1.1"/><path d="M1133.25 724.5V745.5" stroke="#000" stroke-width="1.1"/><path d="M1162.5 724.5V745.5" stroke="#000" stroke-width="1.1"/><path d="M1191.25 724.5V745.5" stroke="#000" stroke-width="1.1"/><path d="M1220.5 724.5V745.5" stroke="#000" stroke-width="1.1"/><path d="M1249.5 724.5V745.5" stroke="#000" stroke-width="1.1"/><path d="M1267.5 724.5V745.5" stroke="#000" stroke-width="1.1"/><text x="942.8" y="740" font-size="12" fill="#111" text-anchor="middle" font-family="Liberation Sans">FM</text><text x="971.2" y="740" font-size="12" fill="#111" text-anchor="middle" font-family="Liberation Sans">DAB</text><text x="1001.6" y="740" font-size="12" fill="#111" text-anchor="middle" font-family="Liberation Sans">C21</text><text x="1030.9" y="740" font-size="12" fill="#111" text-anchor="middle" font-family="Liberation Sans">C22</text><text x="1060.2" y="740" font-size="12" fill="#111" text-anchor="middle" font-family="Liberation Sans">C23</text><text x="1089.6" y="740" font-size="12" fill="#111" text-anchor="middle" font-family="Liberation Sans">C24</text><text x="1118.8" y="740" font-size="12" fill="#111" text-anchor="middle" font-family="Liberation Sans">C25</text><text x="1147.9" y="740" font-size="12" fill="#111" text-anchor="middle" font-family="Liberation Sans">C31</text><text x="1176.9" y="740" font-size="12" fill="#111" text-anchor="middle" font-family="Liberation Sans">C32</text><text x="1205.9" y="740" font-size="12" fill="#111" text-anchor="middle" font-family="Liberation Sans">C36</text><text x="1235.0" y="740" font-size="12" fill="#111" text-anchor="middle" font-family="Liberation Sans">C42</text><text x="1258.5" y="740" font-size="12" fill="#111" text-anchor="middle" font-family="Liberation Sans">FI</text><text x="1276.0" y="740" font-size="12" fill="#111" text-anchor="middle" font-family="Liberation Sans">FI</text><rect x="1318" y="776.5" width="48" height="34" rx="3" stroke="#1a1a1a" stroke-width="1.1" fill="#fff"/><rect x="1321" y="779" width="42" height="29" stroke="#1a1a1a" stroke-width="0.8" fill="none"/><rect x="1324" y="782" width="36" height="23" stroke="#1a1a1a" stroke-width="0.7" fill="none"/><rect x="1326.5" y="773" width="5" height="4" fill="#1a1a1a"/><rect x="1326.5" y="810" width="5" height="4" fill="#1a1a1a"/><rect x="1339.5" y="773" width="5" height="4" fill="#1a1a1a"/><rect x="1339.5" y="810" width="5" height="4" fill="#1a1a1a"/><rect x="1352.5" y="773" width="5" height="4" fill="#1a1a1a"/><rect x="1352.5" y="810" width="5" height="4" fill="#1a1a1a"/><text x="1333" y="796" font-size="6" font-weight="bold" fill="#1a1a1a" font-family="Liberation Sans">Televes</text><path d="M1325 785h5 M1340 785h3 M1353 785h4 M1325 799h8M1343 797h14 M1325 802h4 M1340 802h3 M1352 802h5" stroke="#1a1a1a" stroke-width="1.2"/><path d="M1319 784v18 M1365 784v18" stroke="#1a1a1a" stroke-width="1.2"/><rect x="1403.5" y="750.5" width="302" height="166.5" stroke="#000" stroke-width="1.2" fill="none"/><path d="M1541.2 750.5V917 M1403.5 804.5H1705.5 M1403.5 843.3H1705.5 M1403.5 823.7H1541.2 M1403.5 862.7H1541.2 M1449.5 804.5V917 M1491.3 843.3V917 M1623.4 843.3V917" stroke="#000" stroke-width="1.2" fill="none"/><g transform="translate(1445.5,754)">
<path d="M6 2 Q0 4 0 12 L0 36 Q0 46 7 46 Q11 47 15 45 L48 29 Q53 26 53 23 Q53 20 48 17 L15 1 Q10 -1 6 2 Z" fill="#c4262b"/>
<path d="M6 2 Q0 4 0 12 L0 25 Q20 10 40 13 L15 1 Q10 -1 6 2 Z" fill="#d9342f" opacity="0.7"/>
<text x="3" y="28" font-size="15.5" font-weight="bold" fill="#fff" font-family="Liberation Sans" letter-spacing="-0.5">cype</text>
</g><text x="1426.5" y="818" font-size="12" fill="#111" text-anchor="middle" font-family="Liberation Sans">Scale</text><text x="1495" y="818" font-size="12" fill="#111" text-anchor="middle" font-family="Liberation Sans">Date</text><text x="1426.5" y="838" font-size="12" fill="#111" text-anchor="middle" font-family="Liberation Sans">N/S</text><text x="1495" y="838" font-size="12" fill="#111" text-anchor="middle" font-family="Liberation Sans">xx/xxx/xx</text><text x="1426.5" y="857" font-size="12" fill="#111" text-anchor="middle" font-family="Liberation Sans">Process</text><text x="1470.4" y="857" font-size="12" fill="#111" text-anchor="middle" font-family="Liberation Sans">Design</text><text x="1516" y="857" font-size="12" fill="#111" text-anchor="middle" font-family="Liberation Sans">Revision</text><text x="1426.5" y="895" font-size="12" fill="#111" text-anchor="middle" font-family="Liberation Sans">-</text><text x="1470.4" y="895" font-size="12" fill="#111" text-anchor="middle" font-family="Liberation Sans">2.4.</text><text x="1516" y="895" font-size="12" fill="#111" text-anchor="middle" font-family="Liberation Sans">-</text><text x="1545.5" y="763" font-size="10" fill="#111" text-anchor="start" font-family="Liberation Sans">Telecommunications infrastructure</text><text x="1545.5" y="781" font-size="10" fill="#111" text-anchor="start" font-family="Liberation Sans">Multi-family building</text><text x="1545.5" y="798.7" font-size="10" fill="#111" text-anchor="start" font-family="Liberation Sans">Alicante - Spain</text><text x="1545.5" y="827.7" font-size="10" fill="#111" text-anchor="start" font-family="Liberation Sans">S/MATV network start</text><text x="1545.5" y="857.2" font-size="10" fill="#111" text-anchor="start" font-family="Liberation Sans">Designer</text><text x="1627.4" y="857.2" font-size="10" fill="#111" text-anchor="start" font-family="Liberation Sans">Developer</text></svg></body></html>
